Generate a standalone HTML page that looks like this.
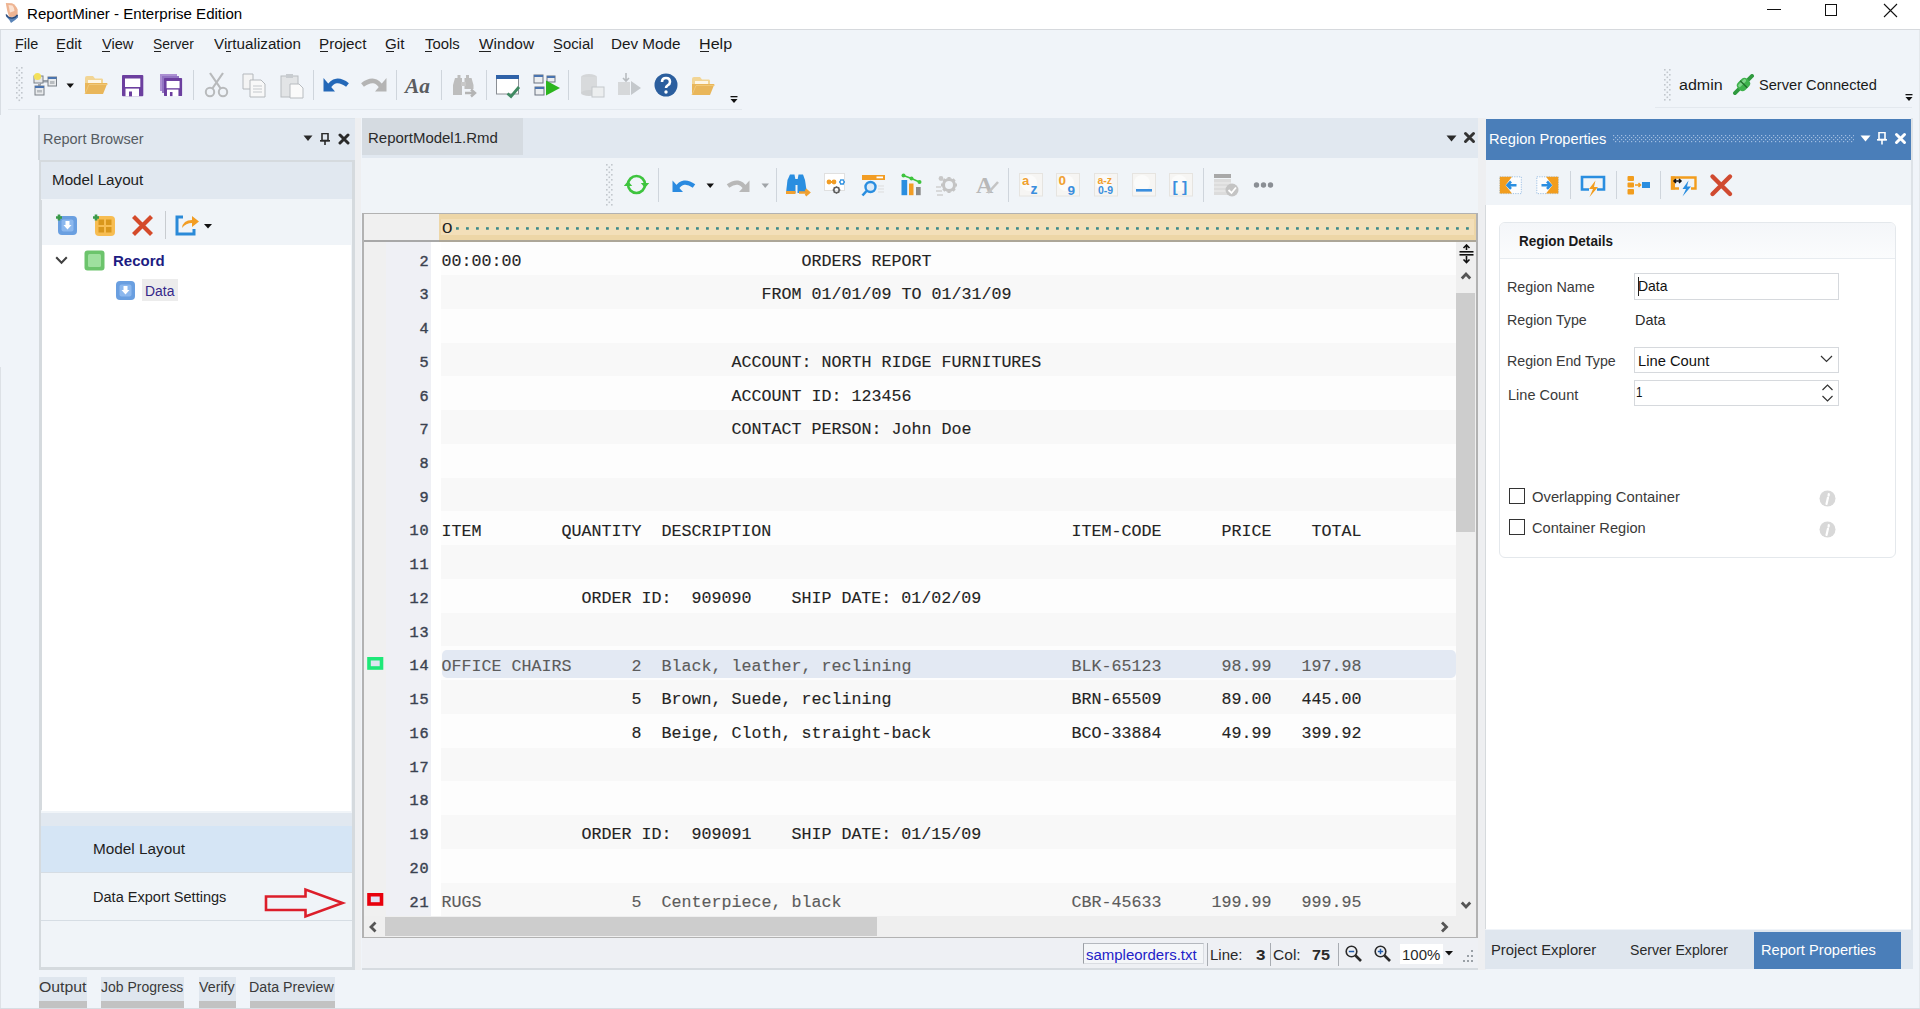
<!DOCTYPE html>
<html><head><meta charset="utf-8"><style>
html,body{margin:0;padding:0;width:1920px;height:1009px;overflow:hidden;background:#f0f4f9;}
.b{position:absolute;display:block;}
.t{position:absolute;white-space:pre;line-height:1;transform-origin:0 0;}
</style></head><body>
<div class="b" style="left:0px;top:0px;width:1920.00px;height:29.00px;background:#ffffff;"></div>
<div class="b" style="left:0px;top:29px;width:1920.00px;height:1.00px;background:#d6d9dd;"></div>
<svg class="b" style="left:0px;top:0px;" width="26" height="28" viewBox="0 0 26 28"><path d="M5.8 3 L12 3.2 Q16 5 17.6 9.5 L17.6 15.5 Q13 17.5 9.2 17 Q6.8 11 5.8 3 Z" fill="#eeb492"/><path d="M8.5 5 L12.5 5.5 Q14.5 8 14.5 11 L10 12.5 Z" fill="#fbe2d2"/><path d="M6 14.5 Q8.5 18.5 12.5 18 Q16 17.3 18 14.5 L18 17.5 Q15 20.5 11 23 Q9.5 19.5 6 16.5 Z" fill="#5a84b8"/><path d="M6 14.5 Q8.5 18.5 12.5 18 Q16 17.3 17.5 14.8" stroke="#2c4a78" stroke-width="1.4" fill="none"/></svg>
<div class="t" style="left:26.79px;top:5.83px;font-family:'Liberation Sans',sans-serif;font-size:15.5px;color:#000;font-weight:normal;transform:scaleX(0.9718);">ReportMiner - Enterprise Edition</div>
<div class="b" style="left:1767px;top:9px;width:14.00px;height:1.00px;background:#111;"></div>
<div class="b" style="left:1825px;top:4px;width:10px;height:10px;border:1px solid #111"></div>
<svg class="b" style="left:1883px;top:3px;" width="15" height="15" viewBox="0 0 15 15"><path d="M1 1 L14 14 M14 1 L1 14" stroke="#111" stroke-width="1.1"/></svg>
<div class="b" style="left:0px;top:30px;width:1.00px;height:85.00px;background:#d8dde3;"></div>
<div class="b" style="left:0px;top:367px;width:1.00px;height:642.00px;background:#dde1e6;"></div>
<div class="b" style="left:1919px;top:30px;width:1.00px;height:979.00px;background:#e4e8ec;"></div>
<div class="t" style="left:14.85px;top:35.58px;font-family:'Liberation Sans',sans-serif;font-size:15.5px;color:#1a1a1a;font-weight:normal;transform:scaleX(0.9309);">File</div>
<div class="t" style="left:56.30px;top:35.58px;font-family:'Liberation Sans',sans-serif;font-size:15.5px;color:#1a1a1a;font-weight:normal;transform:scaleX(0.9638);">Edit</div>
<div class="t" style="left:102.35px;top:35.58px;font-family:'Liberation Sans',sans-serif;font-size:15.5px;color:#1a1a1a;font-weight:normal;transform:scaleX(0.9421);">View</div>
<div class="t" style="left:153.06px;top:35.58px;font-family:'Liberation Sans',sans-serif;font-size:15.5px;color:#1a1a1a;font-weight:normal;transform:scaleX(0.8961);">Server</div>
<div class="t" style="left:213.60px;top:35.58px;font-family:'Liberation Sans',sans-serif;font-size:15.5px;color:#1a1a1a;font-weight:normal;transform:scaleX(0.9826);">Virtualization</div>
<div class="t" style="left:318.78px;top:35.58px;font-family:'Liberation Sans',sans-serif;font-size:15.5px;color:#1a1a1a;font-weight:normal;transform:scaleX(0.9827);">Project</div>
<div class="t" style="left:385.24px;top:35.58px;font-family:'Liberation Sans',sans-serif;font-size:15.5px;color:#1a1a1a;font-weight:normal;transform:scaleX(0.9783);">Git</div>
<div class="t" style="left:424.70px;top:35.58px;font-family:'Liberation Sans',sans-serif;font-size:15.5px;color:#1a1a1a;font-weight:normal;transform:scaleX(0.9592);">Tools</div>
<div class="t" style="left:478.75px;top:35.58px;font-family:'Liberation Sans',sans-serif;font-size:15.5px;color:#1a1a1a;font-weight:normal;transform:scaleX(0.9995);">Window</div>
<div class="t" style="left:553.01px;top:35.58px;font-family:'Liberation Sans',sans-serif;font-size:15.5px;color:#1a1a1a;font-weight:normal;transform:scaleX(0.9579);">Social</div>
<div class="t" style="left:611.28px;top:35.58px;font-family:'Liberation Sans',sans-serif;font-size:15.5px;color:#1a1a1a;font-weight:normal;transform:scaleX(0.9830);">Dev Mode</div>
<div class="t" style="left:698.71px;top:35.58px;font-family:'Liberation Sans',sans-serif;font-size:15.5px;color:#1a1a1a;font-weight:normal;transform:scaleX(1.0392);">Help</div>
<div class="b" style="left:15px;top:50.5px;width:7.00px;height:1.20px;background:#222;"></div>
<div class="b" style="left:57px;top:50.5px;width:7.00px;height:1.20px;background:#222;"></div>
<div class="b" style="left:102px;top:50.5px;width:8.00px;height:1.20px;background:#222;"></div>
<div class="b" style="left:154px;top:50.5px;width:7.00px;height:1.20px;background:#222;"></div>
<div class="b" style="left:226px;top:50.5px;width:5.00px;height:1.20px;background:#222;"></div>
<div class="b" style="left:320px;top:50.5px;width:8.00px;height:1.20px;background:#222;"></div>
<div class="b" style="left:386px;top:50.5px;width:8.00px;height:1.20px;background:#222;"></div>
<div class="b" style="left:425px;top:50.5px;width:7.00px;height:1.20px;background:#222;"></div>
<div class="b" style="left:479px;top:50.5px;width:12.00px;height:1.20px;background:#222;"></div>
<div class="b" style="left:554px;top:50.5px;width:7.00px;height:1.20px;background:#222;"></div>
<div class="b" style="left:700px;top:50.5px;width:9.00px;height:1.20px;background:#222;"></div>
<div class="b" style="left:8px;top:109px;width:734.00px;height:1.00px;background:#e3e8ee;"></div>
<div class="b" style="left:1655px;top:106.5px;width:257.00px;height:1.00px;background:#e3e8ee;"></div>
<svg class="b" style="left:15.5px;top:67px;" width="8" height="36" viewBox="0 0 8 36"><rect x="0" y="0.0" width="1.6" height="1.6" fill="#c2c7cd"/><rect x="5" y="0.0" width="1.6" height="1.6" fill="#c2c7cd"/><rect x="2.5" y="2.5" width="1.6" height="1.6" fill="#c2c7cd"/><rect x="0" y="5.0" width="1.6" height="1.6" fill="#c2c7cd"/><rect x="5" y="5.0" width="1.6" height="1.6" fill="#c2c7cd"/><rect x="2.5" y="7.5" width="1.6" height="1.6" fill="#c2c7cd"/><rect x="0" y="10.0" width="1.6" height="1.6" fill="#c2c7cd"/><rect x="5" y="10.0" width="1.6" height="1.6" fill="#c2c7cd"/><rect x="2.5" y="12.5" width="1.6" height="1.6" fill="#c2c7cd"/><rect x="0" y="15.0" width="1.6" height="1.6" fill="#c2c7cd"/><rect x="5" y="15.0" width="1.6" height="1.6" fill="#c2c7cd"/><rect x="2.5" y="17.5" width="1.6" height="1.6" fill="#c2c7cd"/><rect x="0" y="20.0" width="1.6" height="1.6" fill="#c2c7cd"/><rect x="5" y="20.0" width="1.6" height="1.6" fill="#c2c7cd"/><rect x="2.5" y="22.5" width="1.6" height="1.6" fill="#c2c7cd"/><rect x="0" y="25.0" width="1.6" height="1.6" fill="#c2c7cd"/><rect x="5" y="25.0" width="1.6" height="1.6" fill="#c2c7cd"/><rect x="2.5" y="27.5" width="1.6" height="1.6" fill="#c2c7cd"/><rect x="0" y="30.0" width="1.6" height="1.6" fill="#c2c7cd"/><rect x="5" y="30.0" width="1.6" height="1.6" fill="#c2c7cd"/><rect x="2.5" y="32.5" width="1.6" height="1.6" fill="#c2c7cd"/></svg>
<svg class="b" style="left:1664px;top:69px;" width="8" height="33" viewBox="0 0 8 33"><rect x="0" y="0.0" width="1.6" height="1.6" fill="#c2c7cd"/><rect x="5" y="0.0" width="1.6" height="1.6" fill="#c2c7cd"/><rect x="2.5" y="2.5" width="1.6" height="1.6" fill="#c2c7cd"/><rect x="0" y="5.0" width="1.6" height="1.6" fill="#c2c7cd"/><rect x="5" y="5.0" width="1.6" height="1.6" fill="#c2c7cd"/><rect x="2.5" y="7.5" width="1.6" height="1.6" fill="#c2c7cd"/><rect x="0" y="10.0" width="1.6" height="1.6" fill="#c2c7cd"/><rect x="5" y="10.0" width="1.6" height="1.6" fill="#c2c7cd"/><rect x="2.5" y="12.5" width="1.6" height="1.6" fill="#c2c7cd"/><rect x="0" y="15.0" width="1.6" height="1.6" fill="#c2c7cd"/><rect x="5" y="15.0" width="1.6" height="1.6" fill="#c2c7cd"/><rect x="2.5" y="17.5" width="1.6" height="1.6" fill="#c2c7cd"/><rect x="0" y="20.0" width="1.6" height="1.6" fill="#c2c7cd"/><rect x="5" y="20.0" width="1.6" height="1.6" fill="#c2c7cd"/><rect x="2.5" y="22.5" width="1.6" height="1.6" fill="#c2c7cd"/><rect x="0" y="25.0" width="1.6" height="1.6" fill="#c2c7cd"/><rect x="5" y="25.0" width="1.6" height="1.6" fill="#c2c7cd"/><rect x="2.5" y="27.5" width="1.6" height="1.6" fill="#c2c7cd"/><rect x="0" y="30.0" width="1.6" height="1.6" fill="#c2c7cd"/><rect x="5" y="30.0" width="1.6" height="1.6" fill="#c2c7cd"/></svg>
<div class="b" style="left:193px;top:70px;width:1.00px;height:30.00px;background:#cfd5dc;"></div>
<div class="b" style="left:313px;top:70px;width:1.00px;height:30.00px;background:#cfd5dc;"></div>
<div class="b" style="left:396px;top:70px;width:1.00px;height:30.00px;background:#cfd5dc;"></div>
<div class="b" style="left:441px;top:70px;width:1.00px;height:30.00px;background:#cfd5dc;"></div>
<div class="b" style="left:485.5px;top:70px;width:1.00px;height:30.00px;background:#cfd5dc;"></div>
<div class="b" style="left:568px;top:70px;width:1.00px;height:30.00px;background:#cfd5dc;"></div>
<svg class="b" style="left:33px;top:72px;" width="25" height="25" viewBox="0 0 25 25"><path d="M8 9 L15 9 M6 12 V18 L3 18" stroke="#7a828c" stroke-width="1.3" fill="none"/><path d="M9 10 L15 10 M8 11 L6 17" stroke="#9aa2ac" stroke-width="1" fill="none"/><rect x="1" y="4" width="9" height="7" fill="#e4e6e8" stroke="#7a8088"/><circle cx="4.5" cy="4.5" r="3.6" fill="#f3e05a"/><rect x="15" y="5" width="8.5" height="9" fill="#e8eaec" stroke="#7a8088"/><rect x="15" y="5" width="8.5" height="2" fill="#4a74b0"/><rect x="17" y="9" width="4.5" height="3" fill="#b8bcc0"/><rect x="2" y="14" width="9" height="9" fill="#e8eaec" stroke="#7a8088"/><rect x="2" y="14" width="9" height="2" fill="#4a74b0"/><rect x="4" y="18" width="5" height="2.5" fill="#b8bcc0"/></svg>
<svg class="b" style="left:66px;top:83px;" width="9" height="6" viewBox="0 0 9 6"><path d="M0.5 0.5 L8 0.5 L4.2 5 Z" fill="#111"/></svg>
<svg class="b" style="left:84px;top:75px;" width="25" height="20" viewBox="0 0 25 20"><path d="M1 3 Q1 1 3 1 L9 1 L11 3.5 L18 3.5 Q19 3.5 19 5 L19 9 L1 9 Z" fill="#f2d595"/><path d="M4 5 H17 V9 H4 Z" fill="#fdf6e6"/><path d="M1 19 L1 8 L23.5 8 L19 19 Z" fill="#e9b65a"/><path d="M1 19 L5 9.5 L23.5 9.5" stroke="#f0c878" stroke-width="1" fill="none"/></svg>
<svg class="b" style="left:122.4px;top:74.8px;" width="22" height="22" viewBox="0 0 22 22"><g transform="scale(1)"><rect x="0" y="0" width="21.3" height="21.3" rx="1" fill="#6c3f9f"/><rect x="3" y="3.5" width="15.3" height="8.5" fill="#fff"/><rect x="3.5" y="13.6" width="13.5" height="7.7" fill="#fff"/><rect x="7" y="16.5" width="3" height="4.8" fill="#6c3f9f"/></g></svg>
<svg class="b" style="left:160px;top:74px;" width="23" height="23" viewBox="0 0 23 23"><rect x="0" y="0" width="17" height="17" fill="#ab8fd2"/><rect x="2" y="2" width="17" height="17" fill="#9274c2"/></svg>
<svg class="b" style="left:164px;top:78px;" width="22" height="22" viewBox="0 0 22 22"><g transform="scale(0.85)"><rect x="0" y="0" width="21.3" height="21.3" rx="1" fill="#6c3f9f"/><rect x="3" y="3.5" width="15.3" height="8.5" fill="#fff"/><rect x="3.5" y="13.6" width="13.5" height="7.7" fill="#fff"/><rect x="7" y="16.5" width="3" height="4.8" fill="#6c3f9f"/></g></svg>
<svg class="b" style="left:204px;top:72px;" width="25" height="26" viewBox="0 0 25 26"><path d="M6 1 L17 17 M19 1 L8 17" stroke="#b8babc" stroke-width="2.2"/><circle cx="6" cy="20" r="4.2" fill="none" stroke="#b8babc" stroke-width="2"/><circle cx="19" cy="20" r="4.2" fill="none" stroke="#b8babc" stroke-width="2"/></svg>
<svg class="b" style="left:242px;top:73px;" width="24" height="25" viewBox="0 0 24 25"><path d="M1 1 L11 1 L11 16 L1 16 Z" fill="#f4f4f4" stroke="#b4b8bc"/><path d="M8 7 L19 7 L23 11 L23 24 L8 24 Z" fill="#f8f8f8" stroke="#b4b8bc"/><path d="M11 13 H20 M11 16 H20 M11 19 H20" stroke="#c4c8cc"/></svg>
<svg class="b" style="left:280px;top:73px;" width="24" height="26" viewBox="0 0 24 26"><rect x="1" y="3" width="17" height="21" fill="#e2e4e6" stroke="#b8bcc0"/><rect x="6" y="1" width="7" height="4" fill="#c8ccd0"/><path d="M10 11 L19 11 L23 15 L23 25 L10 25 Z" fill="#fafafa" stroke="#b8bcc0"/></svg>
<svg class="b" style="left:322px;top:76px;" width="27" height="18" viewBox="0 0 27 18"><path d="M1.5 2 L1.5 15.5 L13 15.5 Z" fill="#2468b8"/><path d="M6 12 Q13 -0.5 25.5 9" stroke="#2468b8" stroke-width="4.6" fill="none"/></svg>
<svg class="b" style="left:361px;top:76px;" width="27" height="18" viewBox="0 0 27 18"><path d="M25.5 2 L25.5 15.5 L14 15.5 Z" fill="#b4b4b4"/><path d="M21 12 Q14 -0.5 1.5 9" stroke="#b4b4b4" stroke-width="4.6" fill="none"/></svg>
<div class="t" style="left:405px;top:76px;font-family:'Liberation Serif',serif;font-style:italic;font-weight:bold;font-size:21px;color:#5a5c60;transform:scaleX(1.02)">Aa</div>
<svg class="b" style="left:452px;top:72px;" width="26" height="28" viewBox="0 0 26 28"><rect x="5.5" y="3" width="3" height="4" fill="#bdbdbd"/><rect x="14" y="3" width="3" height="4" fill="#bdbdbd"/><path d="M3 6 H10 V23 H1 V13 Z" fill="#bdbdbd"/><path d="M12.5 6 H19.5 L21.5 13 V17 H12.5 Z" fill="#bdbdbd"/><rect x="9" y="10" width="5" height="4" fill="#c8c8c8"/><path d="M13 21 H22 M19 17.5 L23 21 L19 24.5" stroke="#b4b4b4" stroke-width="2.4" fill="none"/></svg>
<svg class="b" style="left:495px;top:74px;" width="27" height="26" viewBox="0 0 27 26"><rect x="1.5" y="1.5" width="22" height="18.5" fill="#fff" stroke="#8a8e94" stroke-width="1"/><rect x="1" y="1" width="23" height="4" fill="#2f62a8"/><path d="M12.5 19.5 L16 22.5 L24 13" stroke="#3f8a62" stroke-width="2.8" fill="none"/></svg>
<svg class="b" style="left:533px;top:74px;" width="28" height="24" viewBox="0 0 28 24"><rect x="1" y="1" width="9" height="8" fill="#eceef0" stroke="#6a7280"/><rect x="1" y="1" width="9" height="2" fill="#4a74b0"/><rect x="2" y="13" width="9" height="8" fill="#eceef0" stroke="#6a7280"/><rect x="2" y="13" width="9" height="2" fill="#4a74b0"/><rect x="14" y="2" width="8" height="6" fill="#eceef0" stroke="#6a7280"/><rect x="14" y="2" width="8" height="2" fill="#4a74b0"/><path d="M13 6.5 L27 14 L13 21.5 Z" fill="#2cb51e"/></svg>
<svg class="b" style="left:580px;top:73px;" width="26" height="26" viewBox="0 0 26 26"><ellipse cx="9" cy="4" rx="8" ry="3" fill="#d4d6d8"/><rect x="1" y="4" width="16" height="16" fill="#d8dadc"/><ellipse cx="9" cy="20" rx="8" ry="3" fill="#d0d2d4"/><rect x="12" y="14" width="12" height="10" fill="#eceeef" stroke="#c4c8cc"/></svg>
<svg class="b" style="left:616px;top:72px;" width="26" height="26" viewBox="0 0 26 26"><path d="M10 1 V9 M7 6 L10 9 L13 6" stroke="#b8bcc0" stroke-width="1.6" fill="none"/><rect x="2" y="10" width="12" height="13" fill="#d6d8da"/><path d="M15 9 L25 16 L15 23 Z" fill="#c4c8cc"/></svg>
<svg class="b" style="left:654px;top:73px;" width="25" height="25" viewBox="0 0 25 25"><circle cx="12" cy="12" r="11.5" fill="#2b5e9e"/><path d="M8 9 Q8 5 12 5 Q16 5 16 9 Q16 11 13.5 12.5 Q12 13.5 12 15" stroke="#fff" stroke-width="2.6" fill="none"/><circle cx="12" cy="19" r="1.7" fill="#fff"/></svg>
<svg class="b" style="left:691px;top:76px;" width="25" height="20" viewBox="0 0 25 20"><path d="M1 3 Q1 1 3 1 L9 1 L11 3.5 L18 3.5 Q19 3.5 19 5 L19 9 L1 9 Z" fill="#f2d595"/><path d="M4 5 H17 V9 H4 Z" fill="#fdf6e6"/><path d="M1 19 L1 8 L23.5 8 L19 19 Z" fill="#e9b65a"/><path d="M1 19 L5 9.5 L23.5 9.5" stroke="#f0c878" stroke-width="1" fill="none"/></svg>
<svg class="b" style="left:730px;top:96px;" width="9" height="8" viewBox="0 0 9 8"><rect x="0.5" y="0" width="7" height="1.3" fill="#111"/><path d="M0.5 3 L7.5 3 L4 7 Z" fill="#111"/></svg>
<svg class="b" style="left:1904.5px;top:94px;" width="9" height="8" viewBox="0 0 9 8"><rect x="0.5" y="0" width="7" height="1.3" fill="#111"/><path d="M0.5 3 L7.5 3 L4 7 Z" fill="#111"/></svg>
<div class="t" style="left:1679.36px;top:76.83px;font-family:'Liberation Sans',sans-serif;font-size:15.5px;color:#1a1a1a;font-weight:normal;transform:scaleX(1.0342);">admin</div>
<svg class="b" style="left:1732px;top:74px;" width="23" height="23" viewBox="0 0 23 23"><g transform="translate(11.5,10.5) rotate(-45)"><rect x="-14" y="-1.9" width="28" height="3.8" rx="1.9" fill="#2f9a3f"/><rect x="-6.5" y="-5.2" width="13" height="10.4" rx="4" fill="#3fb24d"/><rect x="-5" y="-3.5" width="10" height="3" rx="1.5" fill="#7fd48a"/><path d="M0.3 -5 V5" stroke="#1f6f2b" stroke-width="1.3"/></g></svg>
<div class="t" style="left:1759.27px;top:76.83px;font-family:'Liberation Sans',sans-serif;font-size:15.5px;color:#1a1a1a;font-weight:normal;transform:scaleX(0.9426);">Server Connected</div>
<div class="b" style="left:39px;top:977px;width:48.00px;height:24.00px;background:#dfe6ee;"></div>
<div class="b" style="left:39px;top:1001px;width:48.00px;height:8.00px;background:#c2c2c2;"></div>
<div class="t" style="left:38.71px;top:979.03px;font-family:'Liberation Sans',sans-serif;font-size:15.5px;color:#3a3a3a;font-weight:normal;transform:scaleX(1.0204);">Output</div>
<div class="b" style="left:101px;top:977px;width:83.00px;height:24.00px;background:#dfe6ee;"></div>
<div class="b" style="left:101px;top:1001px;width:83.00px;height:8.00px;background:#c2c2c2;"></div>
<div class="t" style="left:101.22px;top:979.03px;font-family:'Liberation Sans',sans-serif;font-size:15.5px;color:#3a3a3a;font-weight:normal;transform:scaleX(0.9019);">Job Progress</div>
<div class="b" style="left:199px;top:977px;width:37.00px;height:24.00px;background:#dfe6ee;"></div>
<div class="b" style="left:199px;top:1001px;width:37.00px;height:8.00px;background:#c2c2c2;"></div>
<div class="t" style="left:199.36px;top:979.03px;font-family:'Liberation Sans',sans-serif;font-size:15.5px;color:#3a3a3a;font-weight:normal;transform:scaleX(0.9198);">Verify</div>
<div class="b" style="left:250px;top:977px;width:85.00px;height:24.00px;background:#dfe6ee;"></div>
<div class="b" style="left:250px;top:1001px;width:85.00px;height:8.00px;background:#c2c2c2;"></div>
<div class="t" style="left:249.36px;top:979.03px;font-family:'Liberation Sans',sans-serif;font-size:15.5px;color:#3a3a3a;font-weight:normal;transform:scaleX(0.9193);">Data Preview</div>
<div class="b" style="left:0px;top:1008px;width:1920.00px;height:1.00px;background:#d8dde3;"></div>
<div class="b" style="left:38.2px;top:115px;width:1.40px;height:45.40px;background:#d0d6dc;"></div>
<div class="b" style="left:39.6px;top:118px;width:315.10px;height:42.40px;background:#e1e8f0;"></div>
<div class="b" style="left:39.6px;top:118px;width:315.10px;height:1.00px;background:#dce3ea;"></div>
<div class="b" style="left:38.5px;top:160.4px;width:316.20px;height:809.20px;background:#d5dade;"></div>
<div class="b" style="left:41.3px;top:161.8px;width:311.10px;height:805.40px;background:#f0f4f8;"></div>
<div class="t" style="left:43.14px;top:131.02px;font-family:'Liberation Sans',sans-serif;font-size:15.5px;color:#555b61;font-weight:normal;transform:scaleX(0.9343);">Report Browser</div>
<svg class="b" style="left:303px;top:135px;" width="10" height="7" viewBox="0 0 10 7"><path d="M0.5 0.5 L9.5 0.5 L5 6 Z" fill="#2a2a2a"/></svg>
<svg class="b" style="left:320px;top:133px;" width="11" height="12" viewBox="0 0 11 12"><rect x="2" y="0.5" width="6" height="7" fill="none" stroke="#2a2a2a" stroke-width="1.6"/><rect x="0" y="7" width="10" height="1.6" fill="#2a2a2a"/><rect x="4.2" y="8" width="1.6" height="4" fill="#2a2a2a"/></svg>
<svg class="b" style="left:338px;top:133px;" width="12" height="12" viewBox="0 0 12 12"><path d="M2 2 L10 10 M10 2 L2 10" stroke="#2a2a2a" stroke-width="3" stroke-linecap="round"/></svg>
<div class="b" style="left:41.3px;top:161.8px;width:311.10px;height:37.20px;background:#e1e8f0;"></div>
<div class="t" style="left:52.28px;top:171.82px;font-family:'Liberation Sans',sans-serif;font-size:15.5px;color:#222;font-weight:normal;transform:scaleX(0.9808);">Model Layout</div>
<div class="b" style="left:38.5px;top:200.3px;width:3.90px;height:610.20px;background:#d5dade;"></div>
<div class="b" style="left:42.4px;top:200.3px;width:308.90px;height:44.70px;background:#f0f4f8;"></div>
<svg class="b" style="left:56.5px;top:214.5px;overflow:visible" width="21" height="21" viewBox="0 0 21 21"><rect x="1" y="1" width="19" height="19" rx="4" fill="#6a9fe0"/><rect x="4.5" y="4.5" width="12" height="12" rx="2" fill="#8cb8ee"/><path d="M8.5 6 V10 H6.5 L10.5 14.5 L14.5 10 H12.5 V6 Z" fill="#fff"/><path d="M-1 2.5 H5 M2 -0.5 V5.5" stroke="#3a9a4a" stroke-width="2.6" transform="translate(0,0)"/></svg>
<svg class="b" style="left:94px;top:214.5px;overflow:visible" width="22" height="22" viewBox="0 0 22 22"><rect x="1" y="1" width="20" height="20" rx="4" fill="#f7bd52"/><rect x="4.5" y="4.5" width="5.5" height="5.5" fill="#d9971c"/><rect x="12" y="4.5" width="5.5" height="5.5" fill="#d9971c"/><rect x="4.5" y="12" width="5.5" height="5.5" fill="#d9971c"/><rect x="12" y="12" width="5.5" height="5.5" fill="#d9971c"/><path d="M-1 2.5 H5 M2 -0.5 V5.5" stroke="#3a9a4a" stroke-width="2.6"/></svg>
<svg class="b" style="left:131px;top:214px;" width="23" height="23" viewBox="0 0 23 23"><path d="M2.5 2.5 L20.5 20.5 M20.5 2.5 L2.5 20.5" stroke="#d44a2a" stroke-width="4.2"/></svg>
<div class="b" style="left:164.5px;top:211px;width:1.00px;height:28.00px;background:#c8ccd0;"></div>
<svg class="b" style="left:175px;top:213px;" width="26" height="24" viewBox="0 0 26 24"><path d="M8 4 H2 V21 H19 V16" stroke="#2a8ad8" stroke-width="3" fill="none"/><path d="M7 15 Q8 7 17 7 L17 3 L24 8.5 L17 14 L17 10 Q11 10 7 15 Z" fill="#f29d24"/></svg>
<svg class="b" style="left:204px;top:224px;" width="8" height="5" viewBox="0 0 8 5"><path d="M0 0 L8 0 L4 4.5 Z" fill="#111"/></svg>
<div class="b" style="left:42.4px;top:245px;width:308.90px;height:565.50px;background:#ffffff;"></div>
<svg class="b" style="left:55px;top:256px;" width="14" height="9" viewBox="0 0 14 9"><path d="M1.2 1.2 L6.5 6.8 L11.8 1.2" stroke="#404040" stroke-width="2" fill="none"/></svg>
<svg class="b" style="left:84px;top:250px;" width="21" height="21" viewBox="0 0 21 21"><rect x="0.5" y="0.5" width="20" height="20" rx="3" fill="#6cc46c"/><rect x="4" y="4" width="13" height="13" rx="1.5" fill="#9fe09f"/></svg>
<div class="t" style="left:113.45px;top:253.32px;font-family:'Liberation Sans',sans-serif;font-size:15.5px;color:#1c1c82;font-weight:bold;transform:scaleX(0.9668);">Record</div>
<div class="b" style="left:142.3px;top:279px;width:35.40px;height:22.40px;background:#ececec;"></div>
<svg class="b" style="left:114.5px;top:280px;overflow:visible" width="21" height="21" viewBox="0 0 21 21"><rect x="1" y="1" width="19" height="19" rx="4" fill="#6a9fe0"/><rect x="4.5" y="4.5" width="12" height="12" rx="2" fill="#8cb8ee"/><path d="M8.5 6 V10 H6.5 L10.5 14.5 L14.5 10 H12.5 V6 Z" fill="#fff"/></svg>
<div class="t" style="left:144.89px;top:283.32px;font-family:'Liberation Sans',sans-serif;font-size:15.5px;color:#35288a;font-weight:normal;transform:scaleX(0.8982);">Data</div>
<div class="b" style="left:41.3px;top:812.5px;width:311.10px;height:13.00px;background:#e1e8f0;"></div>
<div class="b" style="left:41.3px;top:825.5px;width:311.10px;height:46.50px;background:#d5e5f5;"></div>
<div class="t" style="left:92.97px;top:841.23px;font-family:'Liberation Sans',sans-serif;font-size:15.5px;color:#1e1e1e;font-weight:normal;transform:scaleX(0.9895);">Model Layout</div>
<div class="b" style="left:41.3px;top:872px;width:311.10px;height:1.00px;background:#d6dde4;"></div>
<div class="t" style="left:93.04px;top:889.43px;font-family:'Liberation Sans',sans-serif;font-size:15.5px;color:#1e1e1e;font-weight:normal;transform:scaleX(0.9382);">Data Export Settings</div>
<div class="b" style="left:41.3px;top:920px;width:311.10px;height:1.00px;background:#d6dde4;"></div>
<svg class="b" style="left:262px;top:885px;" width="88" height="36" viewBox="0 0 88 36"><path d="M4 11.5 H43.5 V4.5 L80.5 18 L43.5 31.5 V25 H4 Z" fill="none" stroke="#dc1e2a" stroke-width="2.6"/></svg>
<div class="b" style="left:354.7px;top:118px;width:6.80px;height:851.60px;background:#eeeff1;"></div>
<div class="b" style="left:361.5px;top:118.4px;width:1116.40px;height:39.20px;background:#e1e8f0;"></div>
<div class="b" style="left:361.5px;top:118.4px;width:161.50px;height:36.60px;background:#d5dbe1;"></div>
<div class="t" style="left:368.30px;top:130.32px;font-family:'Liberation Sans',sans-serif;font-size:15.5px;color:#2a2a2a;font-weight:normal;transform:scaleX(0.9655);">ReportModel1.Rmd</div>
<svg class="b" style="left:1446px;top:135px;" width="11" height="7" viewBox="0 0 11 7"><path d="M0.5 0.5 L10.5 0.5 L5.5 6.5 Z" fill="#2a2a2a"/></svg>
<svg class="b" style="left:1463px;top:131px;" width="13" height="13" viewBox="0 0 13 13"><path d="M2.5 2.5 L10.5 10.5 M10.5 2.5 L2.5 10.5" stroke="#333" stroke-width="3" stroke-linecap="round"/></svg>
<div class="b" style="left:361.5px;top:157.6px;width:1116.40px;height:55.40px;background:#f0f4f8;"></div>
<svg class="b" style="left:606.2px;top:164px;" width="8" height="42" viewBox="0 0 8 42"><rect x="0" y="0.0" width="1.6" height="1.6" fill="#c2c7cd"/><rect x="5" y="0.0" width="1.6" height="1.6" fill="#c2c7cd"/><rect x="2.5" y="2.5" width="1.6" height="1.6" fill="#c2c7cd"/><rect x="0" y="5.0" width="1.6" height="1.6" fill="#c2c7cd"/><rect x="5" y="5.0" width="1.6" height="1.6" fill="#c2c7cd"/><rect x="2.5" y="7.5" width="1.6" height="1.6" fill="#c2c7cd"/><rect x="0" y="10.0" width="1.6" height="1.6" fill="#c2c7cd"/><rect x="5" y="10.0" width="1.6" height="1.6" fill="#c2c7cd"/><rect x="2.5" y="12.5" width="1.6" height="1.6" fill="#c2c7cd"/><rect x="0" y="15.0" width="1.6" height="1.6" fill="#c2c7cd"/><rect x="5" y="15.0" width="1.6" height="1.6" fill="#c2c7cd"/><rect x="2.5" y="17.5" width="1.6" height="1.6" fill="#c2c7cd"/><rect x="0" y="20.0" width="1.6" height="1.6" fill="#c2c7cd"/><rect x="5" y="20.0" width="1.6" height="1.6" fill="#c2c7cd"/><rect x="2.5" y="22.5" width="1.6" height="1.6" fill="#c2c7cd"/><rect x="0" y="25.0" width="1.6" height="1.6" fill="#c2c7cd"/><rect x="5" y="25.0" width="1.6" height="1.6" fill="#c2c7cd"/><rect x="2.5" y="27.5" width="1.6" height="1.6" fill="#c2c7cd"/><rect x="0" y="30.0" width="1.6" height="1.6" fill="#c2c7cd"/><rect x="5" y="30.0" width="1.6" height="1.6" fill="#c2c7cd"/><rect x="2.5" y="32.5" width="1.6" height="1.6" fill="#c2c7cd"/><rect x="0" y="35.0" width="1.6" height="1.6" fill="#c2c7cd"/><rect x="5" y="35.0" width="1.6" height="1.6" fill="#c2c7cd"/><rect x="2.5" y="37.5" width="1.6" height="1.6" fill="#c2c7cd"/><rect x="0" y="40.0" width="1.6" height="1.6" fill="#c2c7cd"/><rect x="5" y="40.0" width="1.6" height="1.6" fill="#c2c7cd"/></svg>
<div class="b" style="left:658px;top:168px;width:1.00px;height:34.00px;background:#cfd5dc;"></div>
<div class="b" style="left:776px;top:168px;width:1.00px;height:34.00px;background:#cfd5dc;"></div>
<div class="b" style="left:1007.5px;top:168px;width:1.00px;height:34.00px;background:#cfd5dc;"></div>
<div class="b" style="left:1203px;top:168px;width:1.00px;height:34.00px;background:#cfd5dc;"></div>
<div class="b" style="left:361.5px;top:213px;width:1116.50px;height:725.00px;background:#b2b2b2;"></div>
<div class="b" style="left:364px;top:214px;width:75.00px;height:26.00px;background:#f0f0f0;"></div>
<div class="b" style="left:439px;top:214px;width:1037.00px;height:26.00px;background:#edd6a7;"></div>
<div class="b" style="left:441px;top:219px;width:1033.00px;height:16.00px;background:#f3dfb9;"></div>
<div class="b" style="left:364px;top:240px;width:75.00px;height:2.00px;background:#a8a8a8;"></div>
<div class="b" style="left:439px;top:240px;width:1037.00px;height:2.00px;background:#aca698;"></div>
<svg class="b" style="left:456px;top:226.5px;" width="1020" height="3" viewBox="0 0 1020 3"><rect x="0" y="0.2" width="2.8" height="2.5" fill="#3a8888"/><rect x="10" y="0.2" width="2.8" height="2.5" fill="#3a8888"/><rect x="20" y="0.2" width="2.8" height="2.5" fill="#3a8888"/><rect x="30" y="0.2" width="2.8" height="2.5" fill="#3a8888"/><rect x="40" y="0.2" width="2.8" height="2.5" fill="#3a8888"/><rect x="50" y="0.2" width="2.8" height="2.5" fill="#3a8888"/><rect x="60" y="0.2" width="2.8" height="2.5" fill="#3a8888"/><rect x="70" y="0.2" width="2.8" height="2.5" fill="#3a8888"/><rect x="80" y="0.2" width="2.8" height="2.5" fill="#3a8888"/><rect x="90" y="0.2" width="2.8" height="2.5" fill="#3a8888"/><rect x="100" y="0.2" width="2.8" height="2.5" fill="#3a8888"/><rect x="110" y="0.2" width="2.8" height="2.5" fill="#3a8888"/><rect x="120" y="0.2" width="2.8" height="2.5" fill="#3a8888"/><rect x="130" y="0.2" width="2.8" height="2.5" fill="#3a8888"/><rect x="140" y="0.2" width="2.8" height="2.5" fill="#3a8888"/><rect x="150" y="0.2" width="2.8" height="2.5" fill="#3a8888"/><rect x="160" y="0.2" width="2.8" height="2.5" fill="#3a8888"/><rect x="170" y="0.2" width="2.8" height="2.5" fill="#3a8888"/><rect x="180" y="0.2" width="2.8" height="2.5" fill="#3a8888"/><rect x="190" y="0.2" width="2.8" height="2.5" fill="#3a8888"/><rect x="200" y="0.2" width="2.8" height="2.5" fill="#3a8888"/><rect x="210" y="0.2" width="2.8" height="2.5" fill="#3a8888"/><rect x="220" y="0.2" width="2.8" height="2.5" fill="#3a8888"/><rect x="230" y="0.2" width="2.8" height="2.5" fill="#3a8888"/><rect x="240" y="0.2" width="2.8" height="2.5" fill="#3a8888"/><rect x="250" y="0.2" width="2.8" height="2.5" fill="#3a8888"/><rect x="260" y="0.2" width="2.8" height="2.5" fill="#3a8888"/><rect x="270" y="0.2" width="2.8" height="2.5" fill="#3a8888"/><rect x="280" y="0.2" width="2.8" height="2.5" fill="#3a8888"/><rect x="290" y="0.2" width="2.8" height="2.5" fill="#3a8888"/><rect x="300" y="0.2" width="2.8" height="2.5" fill="#3a8888"/><rect x="310" y="0.2" width="2.8" height="2.5" fill="#3a8888"/><rect x="320" y="0.2" width="2.8" height="2.5" fill="#3a8888"/><rect x="330" y="0.2" width="2.8" height="2.5" fill="#3a8888"/><rect x="340" y="0.2" width="2.8" height="2.5" fill="#3a8888"/><rect x="350" y="0.2" width="2.8" height="2.5" fill="#3a8888"/><rect x="360" y="0.2" width="2.8" height="2.5" fill="#3a8888"/><rect x="370" y="0.2" width="2.8" height="2.5" fill="#3a8888"/><rect x="380" y="0.2" width="2.8" height="2.5" fill="#3a8888"/><rect x="390" y="0.2" width="2.8" height="2.5" fill="#3a8888"/><rect x="400" y="0.2" width="2.8" height="2.5" fill="#3a8888"/><rect x="410" y="0.2" width="2.8" height="2.5" fill="#3a8888"/><rect x="420" y="0.2" width="2.8" height="2.5" fill="#3a8888"/><rect x="430" y="0.2" width="2.8" height="2.5" fill="#3a8888"/><rect x="440" y="0.2" width="2.8" height="2.5" fill="#3a8888"/><rect x="450" y="0.2" width="2.8" height="2.5" fill="#3a8888"/><rect x="460" y="0.2" width="2.8" height="2.5" fill="#3a8888"/><rect x="470" y="0.2" width="2.8" height="2.5" fill="#3a8888"/><rect x="480" y="0.2" width="2.8" height="2.5" fill="#3a8888"/><rect x="490" y="0.2" width="2.8" height="2.5" fill="#3a8888"/><rect x="500" y="0.2" width="2.8" height="2.5" fill="#3a8888"/><rect x="510" y="0.2" width="2.8" height="2.5" fill="#3a8888"/><rect x="520" y="0.2" width="2.8" height="2.5" fill="#3a8888"/><rect x="530" y="0.2" width="2.8" height="2.5" fill="#3a8888"/><rect x="540" y="0.2" width="2.8" height="2.5" fill="#3a8888"/><rect x="550" y="0.2" width="2.8" height="2.5" fill="#3a8888"/><rect x="560" y="0.2" width="2.8" height="2.5" fill="#3a8888"/><rect x="570" y="0.2" width="2.8" height="2.5" fill="#3a8888"/><rect x="580" y="0.2" width="2.8" height="2.5" fill="#3a8888"/><rect x="590" y="0.2" width="2.8" height="2.5" fill="#3a8888"/><rect x="600" y="0.2" width="2.8" height="2.5" fill="#3a8888"/><rect x="610" y="0.2" width="2.8" height="2.5" fill="#3a8888"/><rect x="620" y="0.2" width="2.8" height="2.5" fill="#3a8888"/><rect x="630" y="0.2" width="2.8" height="2.5" fill="#3a8888"/><rect x="640" y="0.2" width="2.8" height="2.5" fill="#3a8888"/><rect x="650" y="0.2" width="2.8" height="2.5" fill="#3a8888"/><rect x="660" y="0.2" width="2.8" height="2.5" fill="#3a8888"/><rect x="670" y="0.2" width="2.8" height="2.5" fill="#3a8888"/><rect x="680" y="0.2" width="2.8" height="2.5" fill="#3a8888"/><rect x="690" y="0.2" width="2.8" height="2.5" fill="#3a8888"/><rect x="700" y="0.2" width="2.8" height="2.5" fill="#3a8888"/><rect x="710" y="0.2" width="2.8" height="2.5" fill="#3a8888"/><rect x="720" y="0.2" width="2.8" height="2.5" fill="#3a8888"/><rect x="730" y="0.2" width="2.8" height="2.5" fill="#3a8888"/><rect x="740" y="0.2" width="2.8" height="2.5" fill="#3a8888"/><rect x="750" y="0.2" width="2.8" height="2.5" fill="#3a8888"/><rect x="760" y="0.2" width="2.8" height="2.5" fill="#3a8888"/><rect x="770" y="0.2" width="2.8" height="2.5" fill="#3a8888"/><rect x="780" y="0.2" width="2.8" height="2.5" fill="#3a8888"/><rect x="790" y="0.2" width="2.8" height="2.5" fill="#3a8888"/><rect x="800" y="0.2" width="2.8" height="2.5" fill="#3a8888"/><rect x="810" y="0.2" width="2.8" height="2.5" fill="#3a8888"/><rect x="820" y="0.2" width="2.8" height="2.5" fill="#3a8888"/><rect x="830" y="0.2" width="2.8" height="2.5" fill="#3a8888"/><rect x="840" y="0.2" width="2.8" height="2.5" fill="#3a8888"/><rect x="850" y="0.2" width="2.8" height="2.5" fill="#3a8888"/><rect x="860" y="0.2" width="2.8" height="2.5" fill="#3a8888"/><rect x="870" y="0.2" width="2.8" height="2.5" fill="#3a8888"/><rect x="880" y="0.2" width="2.8" height="2.5" fill="#3a8888"/><rect x="890" y="0.2" width="2.8" height="2.5" fill="#3a8888"/><rect x="900" y="0.2" width="2.8" height="2.5" fill="#3a8888"/><rect x="910" y="0.2" width="2.8" height="2.5" fill="#3a8888"/><rect x="920" y="0.2" width="2.8" height="2.5" fill="#3a8888"/><rect x="930" y="0.2" width="2.8" height="2.5" fill="#3a8888"/><rect x="940" y="0.2" width="2.8" height="2.5" fill="#3a8888"/><rect x="950" y="0.2" width="2.8" height="2.5" fill="#3a8888"/><rect x="960" y="0.2" width="2.8" height="2.5" fill="#3a8888"/><rect x="970" y="0.2" width="2.8" height="2.5" fill="#3a8888"/><rect x="980" y="0.2" width="2.8" height="2.5" fill="#3a8888"/><rect x="990" y="0.2" width="2.8" height="2.5" fill="#3a8888"/><rect x="1000" y="0.2" width="2.8" height="2.5" fill="#3a8888"/><rect x="1010" y="0.2" width="2.8" height="2.5" fill="#3a8888"/></svg>
<div class="t" style="left:442.25px;top:220.90px;font-family:'Liberation Sans',sans-serif;font-size:14px;color:#222;font-weight:normal;transform:scaleX(1.3393);">0</div>
<div class="b" style="left:364px;top:242px;width:22.00px;height:674.30px;background:#f0f0f0;"></div>
<div class="b" style="left:386px;top:242px;width:45.00px;height:674.30px;background:#eff0f5;"></div>
<div class="b" style="left:431px;top:242px;width:10.00px;height:674.30px;background:#ffffff;"></div>
<div class="b" style="left:1456px;top:242px;width:20.00px;height:674.30px;background:#efefef;"></div>
<div class="b" style="left:1456px;top:293px;width:19.00px;height:239.00px;background:#cdcdcd;"></div>
<svg class="b" style="left:1458px;top:244px;" width="17" height="20" viewBox="0 0 17 20"><path d="M8.5 1 V6 M5.5 4 L8.5 1 L11.5 4" stroke="#111" stroke-width="1.6" fill="none"/><rect x="1.5" y="7" width="14" height="1.6" fill="#111"/><rect x="1.5" y="10" width="14" height="1.6" fill="#111"/><path d="M8.5 12 V18 M5.5 15.5 L8.5 18.5 L11.5 15.5" stroke="#111" stroke-width="1.6" fill="none"/></svg>
<svg class="b" style="left:1460px;top:270px;" width="12" height="11" viewBox="0 0 12 11"><path d="M1.8 8.5 L6 4 L10.2 8.5" stroke="#555" stroke-width="2.8" fill="none"/></svg>
<svg class="b" style="left:1460px;top:900px;" width="12" height="11" viewBox="0 0 12 11"><path d="M1.8 2.5 L6 7 L10.2 2.5" stroke="#555" stroke-width="2.8" fill="none"/></svg>
<div class="b" style="left:441px;top:241.5px;width:1014.50px;height:33.74px;background:#fdfdfd;"></div>
<div class="b" style="left:441px;top:275.24px;width:1014.50px;height:33.74px;background:#f8f8f8;"></div>
<div class="b" style="left:441px;top:308.98px;width:1014.50px;height:33.74px;background:#fdfdfd;"></div>
<div class="b" style="left:441px;top:342.72px;width:1014.50px;height:33.74px;background:#f8f8f8;"></div>
<div class="b" style="left:441px;top:376.46px;width:1014.50px;height:33.74px;background:#fdfdfd;"></div>
<div class="b" style="left:441px;top:410.2px;width:1014.50px;height:33.74px;background:#f8f8f8;"></div>
<div class="b" style="left:441px;top:443.94px;width:1014.50px;height:33.74px;background:#fdfdfd;"></div>
<div class="b" style="left:441px;top:477.68px;width:1014.50px;height:33.74px;background:#f8f8f8;"></div>
<div class="b" style="left:441px;top:511.42px;width:1014.50px;height:33.74px;background:#fdfdfd;"></div>
<div class="b" style="left:441px;top:545.16px;width:1014.50px;height:33.74px;background:#f8f8f8;"></div>
<div class="b" style="left:441px;top:578.9px;width:1014.50px;height:33.74px;background:#fdfdfd;"></div>
<div class="b" style="left:441px;top:612.64px;width:1014.50px;height:33.74px;background:#f8f8f8;"></div>
<div class="b" style="left:441px;top:646.38px;width:1014.50px;height:33.74px;background:#fdfdfd;"></div>
<div class="b" style="left:441px;top:680.12px;width:1014.50px;height:33.74px;background:#f8f8f8;"></div>
<div class="b" style="left:441px;top:713.86px;width:1014.50px;height:33.74px;background:#fdfdfd;"></div>
<div class="b" style="left:441px;top:747.6px;width:1014.50px;height:33.74px;background:#f8f8f8;"></div>
<div class="b" style="left:441px;top:781.34px;width:1014.50px;height:33.74px;background:#fdfdfd;"></div>
<div class="b" style="left:441px;top:815.08px;width:1014.50px;height:33.74px;background:#f8f8f8;"></div>
<div class="b" style="left:441px;top:848.82px;width:1014.50px;height:33.74px;background:#fdfdfd;"></div>
<div class="b" style="left:441px;top:882.56px;width:1014.50px;height:33.74px;background:#f8f8f8;"></div>
<div class="b" style="left:441.5px;top:650.3px;width:1014.00px;height:27.90px;background:#e3e9f3;border-radius:5px"></div>
<svg class="b" style="left:367px;top:656.5px;" width="17" height="13" viewBox="0 0 17 13"><rect x="2" y="1.7" width="12.5" height="9.3" fill="#dde5f0" stroke="#1ee878" stroke-width="3.6"/></svg>
<svg class="b" style="left:367px;top:892.5px;" width="17" height="13" viewBox="0 0 17 13"><rect x="2" y="1.7" width="12.5" height="9.3" fill="#e2e2f4" stroke="#e8000c" stroke-width="3.6"/></svg>
<div class="t" style="left:419.50px;top:254.55px;font-family:'Liberation Mono',monospace;font-size:15.2px;letter-spacing:0.879px;color:#3a4250;-webkit-text-stroke:0.4px #3a4250">2</div>
<div class="t" style="left:419.50px;top:288.29px;font-family:'Liberation Mono',monospace;font-size:15.2px;letter-spacing:0.879px;color:#3a4250;-webkit-text-stroke:0.4px #3a4250">3</div>
<div class="t" style="left:419.50px;top:322.03px;font-family:'Liberation Mono',monospace;font-size:15.2px;letter-spacing:0.879px;color:#3a4250;-webkit-text-stroke:0.4px #3a4250">4</div>
<div class="t" style="left:419.50px;top:355.77px;font-family:'Liberation Mono',monospace;font-size:15.2px;letter-spacing:0.879px;color:#3a4250;-webkit-text-stroke:0.4px #3a4250">5</div>
<div class="t" style="left:419.50px;top:389.51px;font-family:'Liberation Mono',monospace;font-size:15.2px;letter-spacing:0.879px;color:#3a4250;-webkit-text-stroke:0.4px #3a4250">6</div>
<div class="t" style="left:419.50px;top:423.25px;font-family:'Liberation Mono',monospace;font-size:15.2px;letter-spacing:0.879px;color:#3a4250;-webkit-text-stroke:0.4px #3a4250">7</div>
<div class="t" style="left:419.50px;top:456.99px;font-family:'Liberation Mono',monospace;font-size:15.2px;letter-spacing:0.879px;color:#3a4250;-webkit-text-stroke:0.4px #3a4250">8</div>
<div class="t" style="left:419.50px;top:490.73px;font-family:'Liberation Mono',monospace;font-size:15.2px;letter-spacing:0.879px;color:#3a4250;-webkit-text-stroke:0.4px #3a4250">9</div>
<div class="t" style="left:409.50px;top:524.47px;font-family:'Liberation Mono',monospace;font-size:15.2px;letter-spacing:0.879px;color:#3a4250;-webkit-text-stroke:0.4px #3a4250">10</div>
<div class="t" style="left:409.50px;top:558.21px;font-family:'Liberation Mono',monospace;font-size:15.2px;letter-spacing:0.879px;color:#3a4250;-webkit-text-stroke:0.4px #3a4250">11</div>
<div class="t" style="left:409.50px;top:591.95px;font-family:'Liberation Mono',monospace;font-size:15.2px;letter-spacing:0.879px;color:#3a4250;-webkit-text-stroke:0.4px #3a4250">12</div>
<div class="t" style="left:409.50px;top:625.69px;font-family:'Liberation Mono',monospace;font-size:15.2px;letter-spacing:0.879px;color:#3a4250;-webkit-text-stroke:0.4px #3a4250">13</div>
<div class="t" style="left:409.50px;top:659.43px;font-family:'Liberation Mono',monospace;font-size:15.2px;letter-spacing:0.879px;color:#3a4250;-webkit-text-stroke:0.4px #3a4250">14</div>
<div class="t" style="left:409.50px;top:693.17px;font-family:'Liberation Mono',monospace;font-size:15.2px;letter-spacing:0.879px;color:#3a4250;-webkit-text-stroke:0.4px #3a4250">15</div>
<div class="t" style="left:409.50px;top:726.91px;font-family:'Liberation Mono',monospace;font-size:15.2px;letter-spacing:0.879px;color:#3a4250;-webkit-text-stroke:0.4px #3a4250">16</div>
<div class="t" style="left:409.50px;top:760.65px;font-family:'Liberation Mono',monospace;font-size:15.2px;letter-spacing:0.879px;color:#3a4250;-webkit-text-stroke:0.4px #3a4250">17</div>
<div class="t" style="left:409.50px;top:794.39px;font-family:'Liberation Mono',monospace;font-size:15.2px;letter-spacing:0.879px;color:#3a4250;-webkit-text-stroke:0.4px #3a4250">18</div>
<div class="t" style="left:409.50px;top:828.13px;font-family:'Liberation Mono',monospace;font-size:15.2px;letter-spacing:0.879px;color:#3a4250;-webkit-text-stroke:0.4px #3a4250">19</div>
<div class="t" style="left:409.50px;top:861.87px;font-family:'Liberation Mono',monospace;font-size:15.2px;letter-spacing:0.879px;color:#3a4250;-webkit-text-stroke:0.4px #3a4250">20</div>
<div class="t" style="left:409.50px;top:895.61px;font-family:'Liberation Mono',monospace;font-size:15.2px;letter-spacing:0.879px;color:#3a4250;-webkit-text-stroke:0.4px #3a4250">21</div>
<div class="t" style="left:441.50px;top:253.74px;font-family:'Liberation Mono',monospace;font-size:16.664px;color:#242424;-webkit-text-stroke:0.12px #242424">00:00:00</div>
<div class="t" style="left:801.50px;top:253.74px;font-family:'Liberation Mono',monospace;font-size:16.664px;color:#242424;-webkit-text-stroke:0.12px #242424">ORDERS REPORT</div>
<div class="t" style="left:761.50px;top:287.48px;font-family:'Liberation Mono',monospace;font-size:16.664px;color:#242424;-webkit-text-stroke:0.12px #242424">FROM 01/01/09 TO 01/31/09</div>
<div class="t" style="left:731.50px;top:354.96px;font-family:'Liberation Mono',monospace;font-size:16.664px;color:#242424;-webkit-text-stroke:0.12px #242424">ACCOUNT: NORTH RIDGE FURNITURES</div>
<div class="t" style="left:731.50px;top:388.70px;font-family:'Liberation Mono',monospace;font-size:16.664px;color:#242424;-webkit-text-stroke:0.12px #242424">ACCOUNT ID: 123456</div>
<div class="t" style="left:731.50px;top:422.44px;font-family:'Liberation Mono',monospace;font-size:16.664px;color:#242424;-webkit-text-stroke:0.12px #242424">CONTACT PERSON: John Doe</div>
<div class="t" style="left:441.50px;top:523.66px;font-family:'Liberation Mono',monospace;font-size:16.664px;color:#242424;-webkit-text-stroke:0.12px #242424">ITEM        QUANTITY  DESCRIPTION</div>
<div class="t" style="left:1071.50px;top:523.66px;font-family:'Liberation Mono',monospace;font-size:16.664px;color:#242424;-webkit-text-stroke:0.12px #242424">ITEM-CODE</div>
<div class="t" style="left:1221.50px;top:523.66px;font-family:'Liberation Mono',monospace;font-size:16.664px;color:#242424;-webkit-text-stroke:0.12px #242424">PRICE</div>
<div class="t" style="left:1311.50px;top:523.66px;font-family:'Liberation Mono',monospace;font-size:16.664px;color:#242424;-webkit-text-stroke:0.12px #242424">TOTAL</div>
<div class="t" style="left:581.50px;top:591.14px;font-family:'Liberation Mono',monospace;font-size:16.664px;color:#242424;-webkit-text-stroke:0.12px #242424">ORDER ID:  909090    SHIP DATE: 01/02/09</div>
<div class="t" style="left:441.50px;top:658.62px;font-family:'Liberation Mono',monospace;font-size:16.664px;color:#5c5c5c;-webkit-text-stroke:0.12px #5c5c5c">OFFICE CHAIRS</div>
<div class="t" style="left:631.50px;top:658.62px;font-family:'Liberation Mono',monospace;font-size:16.664px;color:#5c5c5c;-webkit-text-stroke:0.12px #5c5c5c">2  Black, leather, reclining</div>
<div class="t" style="left:1071.50px;top:658.62px;font-family:'Liberation Mono',monospace;font-size:16.664px;color:#5c5c5c;-webkit-text-stroke:0.12px #5c5c5c">BLK-65123</div>
<div class="t" style="left:1221.50px;top:658.62px;font-family:'Liberation Mono',monospace;font-size:16.664px;color:#5c5c5c;-webkit-text-stroke:0.12px #5c5c5c">98.99</div>
<div class="t" style="left:1301.50px;top:658.62px;font-family:'Liberation Mono',monospace;font-size:16.664px;color:#5c5c5c;-webkit-text-stroke:0.12px #5c5c5c">197.98</div>
<div class="t" style="left:631.50px;top:692.36px;font-family:'Liberation Mono',monospace;font-size:16.664px;color:#242424;-webkit-text-stroke:0.12px #242424">5  Brown, Suede, reclining</div>
<div class="t" style="left:1071.50px;top:692.36px;font-family:'Liberation Mono',monospace;font-size:16.664px;color:#242424;-webkit-text-stroke:0.12px #242424">BRN-65509</div>
<div class="t" style="left:1221.50px;top:692.36px;font-family:'Liberation Mono',monospace;font-size:16.664px;color:#242424;-webkit-text-stroke:0.12px #242424">89.00</div>
<div class="t" style="left:1301.50px;top:692.36px;font-family:'Liberation Mono',monospace;font-size:16.664px;color:#242424;-webkit-text-stroke:0.12px #242424">445.00</div>
<div class="t" style="left:631.50px;top:726.10px;font-family:'Liberation Mono',monospace;font-size:16.664px;color:#242424;-webkit-text-stroke:0.12px #242424">8  Beige, Cloth, straight-back</div>
<div class="t" style="left:1071.50px;top:726.10px;font-family:'Liberation Mono',monospace;font-size:16.664px;color:#242424;-webkit-text-stroke:0.12px #242424">BCO-33884</div>
<div class="t" style="left:1221.50px;top:726.10px;font-family:'Liberation Mono',monospace;font-size:16.664px;color:#242424;-webkit-text-stroke:0.12px #242424">49.99</div>
<div class="t" style="left:1301.50px;top:726.10px;font-family:'Liberation Mono',monospace;font-size:16.664px;color:#242424;-webkit-text-stroke:0.12px #242424">399.92</div>
<div class="t" style="left:581.50px;top:827.32px;font-family:'Liberation Mono',monospace;font-size:16.664px;color:#242424;-webkit-text-stroke:0.12px #242424">ORDER ID:  909091    SHIP DATE: 01/15/09</div>
<div class="t" style="left:441.50px;top:894.80px;font-family:'Liberation Mono',monospace;font-size:16.664px;color:#5c5c5c;-webkit-text-stroke:0.12px #5c5c5c">RUGS</div>
<div class="t" style="left:631.50px;top:894.80px;font-family:'Liberation Mono',monospace;font-size:16.664px;color:#5c5c5c;-webkit-text-stroke:0.12px #5c5c5c">5  Centerpiece, black</div>
<div class="t" style="left:1071.50px;top:894.80px;font-family:'Liberation Mono',monospace;font-size:16.664px;color:#5c5c5c;-webkit-text-stroke:0.12px #5c5c5c">CBR-45633</div>
<div class="t" style="left:1211.50px;top:894.80px;font-family:'Liberation Mono',monospace;font-size:16.664px;color:#5c5c5c;-webkit-text-stroke:0.12px #5c5c5c">199.99</div>
<div class="t" style="left:1301.50px;top:894.80px;font-family:'Liberation Mono',monospace;font-size:16.664px;color:#5c5c5c;-webkit-text-stroke:0.12px #5c5c5c">999.95</div>
<div class="b" style="left:364px;top:916.3px;width:1112.00px;height:20.70px;background:#efefef;"></div>
<div class="b" style="left:385px;top:917px;width:492.00px;height:19.00px;background:#cdcdcd;"></div>
<svg class="b" style="left:368px;top:919.5px;" width="11" height="14" viewBox="0 0 11 14"><path d="M7.5 2.5 L3 7 L7.5 11.5" stroke="#555" stroke-width="2.8" fill="none"/></svg>
<svg class="b" style="left:1439px;top:919.5px;" width="11" height="14" viewBox="0 0 11 14"><path d="M3 2.5 L7.5 7 L3 11.5" stroke="#555" stroke-width="2.8" fill="none"/></svg>
<div class="b" style="left:362px;top:938px;width:1116.00px;height:30.00px;background:#eef0f4;"></div>
<div class="b" style="left:362px;top:968px;width:1116.00px;height:2.00px;background:#d6dbe0;"></div>
<div class="b" style="left:1082.8px;top:942.5px;width:121.40px;height:21.00px;background:#f4f6f8;border:1px solid #dadde2;border-left-color:#9a9ea4;border-top-color:#b4b8be;border-left-width:1.5px;box-sizing:border-box"></div>
<div class="t" style="left:1086.05px;top:946.83px;font-family:'Liberation Sans',sans-serif;font-size:15.5px;color:#2222c8;font-weight:normal;transform:scaleX(0.9655);">sampleorders.txt</div>
<div class="b" style="left:1206.5px;top:943px;width:1.00px;height:23.00px;background:#a8acb2;"></div>
<div class="t" style="left:1209.80px;top:946.83px;font-family:'Liberation Sans',sans-serif;font-size:15.5px;color:#2a2a2a;font-weight:normal;transform:scaleX(0.9677);">Line:</div>
<div class="t" style="left:1255.66px;top:946.83px;font-family:'Liberation Sans',sans-serif;font-size:15.5px;color:#2a2a2a;font-weight:bold;transform:scaleX(1.0968);">3</div>
<div class="b" style="left:1269.5px;top:943px;width:1.00px;height:23.00px;background:#a8acb2;"></div>
<div class="t" style="left:1272.72px;top:946.83px;font-family:'Liberation Sans',sans-serif;font-size:15.5px;color:#2a2a2a;font-weight:normal;transform:scaleX(1.0031);">Col:</div>
<div class="t" style="left:1312.35px;top:946.83px;font-family:'Liberation Sans',sans-serif;font-size:15.5px;color:#2a2a2a;font-weight:bold;transform:scaleX(1.0445);">75</div>
<div class="b" style="left:1337.8px;top:943px;width:1.00px;height:23.00px;background:#a8acb2;"></div>
<svg class="b" style="left:1345px;top:945px;" width="18" height="18" viewBox="0 0 18 18"><circle cx="6.5" cy="6.5" r="5.3" fill="none" stroke="#2a2a2a" stroke-width="1.6"/><path d="M10.5 10.5 L16 16" stroke="#2a2a2a" stroke-width="2.6"/><path d="M3.8 6.5 H9.2" stroke="#1f5aa8" stroke-width="1.5"/></svg>
<svg class="b" style="left:1374px;top:945px;" width="18" height="18" viewBox="0 0 18 18"><circle cx="6.5" cy="6.5" r="5.3" fill="none" stroke="#2a2a2a" stroke-width="1.6"/><path d="M10.5 10.5 L16 16" stroke="#2a2a2a" stroke-width="2.6"/><path d="M3.8 6.5 H9.2" stroke="#1f5aa8" stroke-width="1.5"/><path d="M6.5 3.8 V9.2" stroke="#1f5aa8" stroke-width="1.5"/></svg>
<div class="b" style="left:1400px;top:944px;width:43.00px;height:20.00px;background:#ffffff;"></div>
<div class="t" style="left:1402.30px;top:946.83px;font-family:'Liberation Sans',sans-serif;font-size:15.5px;color:#2a2a2a;font-weight:normal;transform:scaleX(0.9651);">100%</div>
<svg class="b" style="left:1445px;top:951px;" width="8" height="5" viewBox="0 0 8 5"><path d="M0 0 L8 0 L4 4.5 Z" fill="#111"/></svg>
<svg class="b" style="left:1461px;top:950px;" width="15" height="15" viewBox="0 0 15 15"><rect x="10" y="0" width="2" height="2" fill="#9aa0a6"/><rect x="6" y="5" width="2" height="2" fill="#9aa0a6"/><rect x="10" y="5" width="2" height="2" fill="#9aa0a6"/><rect x="2" y="10" width="2" height="2" fill="#9aa0a6"/><rect x="6" y="10" width="2" height="2" fill="#9aa0a6"/><rect x="10" y="10" width="2" height="2" fill="#9aa0a6"/></svg>
<svg class="b" style="left:624px;top:174px;" width="26" height="22" viewBox="0 0 26 22"><path d="M4 10.5 A8.5 8.5 0 0 1 21 10.5" stroke="#3ec43e" stroke-width="2.6" fill="none"/><path d="M21 10.5 A8.5 8.5 0 0 1 4 10.5" stroke="#3ec43e" stroke-width="2.6" fill="none"/><path d="M16.8 9 L25.2 9 L21 14 Z" fill="#3ec43e"/><path d="M-0.2 12 L8.2 12 L4 7 Z" fill="#3ec43e"/></svg>
<svg class="b" style="left:671px;top:178px;" width="25" height="16" viewBox="0 0 25 16"><path d="M1.5 2.5 L1.5 14 L12 14 Z" fill="#2a8ae0"/><path d="M5.5 10.5 Q12 0 23 8" stroke="#2a8ae0" stroke-width="4.2" fill="none"/></svg>
<svg class="b" style="left:706px;top:183px;" width="9" height="6" viewBox="0 0 9 6"><path d="M0.5 0.5 L8 0.5 L4.2 5 Z" fill="#111"/></svg>
<svg class="b" style="left:726px;top:178px;" width="25" height="16" viewBox="0 0 25 16"><path d="M23.5 2.5 L23.5 14 L13 14 Z" fill="#b8b8b8"/><path d="M19.5 10.5 Q13 0 2 8" stroke="#b8b8b8" stroke-width="4.2" fill="none"/></svg>
<svg class="b" style="left:761px;top:183px;" width="9" height="6" viewBox="0 0 9 6"><path d="M0.5 0.5 L8 0.5 L4.2 5 Z" fill="#a0a4a8"/></svg>
<svg class="b" style="left:785px;top:173px;" width="26" height="24" viewBox="0 0 26 24"><path d="M1 20 L2.5 7 L5 1.5 H9.5 L10.5 7 V20 Z" fill="#2a8ee0"/><path d="M12.5 20 V7 L13.5 1.5 H18 L20 7 L21.5 17 V20 Z" fill="#2a8ee0"/><rect x="9.5" y="6" width="4" height="6" fill="#2a8ee0"/><rect x="1" y="18" width="9.5" height="3" fill="#f0a030"/><path d="M14 19.5 H23.5 M20.5 16.5 L24 19.5 L20.5 22.5" stroke="#f0a030" stroke-width="2.4" fill="none"/></svg>
<svg class="b" style="left:824px;top:173px;" width="24" height="24" viewBox="0 0 24 24"><rect x="0.5" y="0.5" width="20" height="17" fill="#fff" stroke="#e0e0e0"/><circle cx="5" cy="9" r="2.4" fill="#f29d24"/><circle cx="10" cy="9" r="2.4" fill="#f29d24"/><rect x="5" y="8" width="5" height="2" fill="#f29d24"/><circle cx="18" cy="9" r="2" fill="none" stroke="#2a8ee0" stroke-width="1.10"/><path d="M19.80 9.00 L20.90 9.00" stroke="#2a8ee0" stroke-width="1.5"/><path d="M18.90 10.56 L19.45 11.51" stroke="#2a8ee0" stroke-width="1.5"/><path d="M17.10 10.56 L16.55 11.51" stroke="#2a8ee0" stroke-width="1.5"/><path d="M16.20 9.00 L15.10 9.00" stroke="#2a8ee0" stroke-width="1.5"/><path d="M17.10 7.44 L16.55 6.49" stroke="#2a8ee0" stroke-width="1.5"/><path d="M18.90 7.44 L19.45 6.49" stroke="#2a8ee0" stroke-width="1.5"/><circle cx="12.5" cy="17" r="2.6" fill="none" stroke="#606060" stroke-width="1.43"/><path d="M14.84 17.00 L16.27 17.00" stroke="#606060" stroke-width="1.8"/><path d="M14.15 18.65 L15.17 19.67" stroke="#606060" stroke-width="1.8"/><path d="M12.50 19.34 L12.50 20.77" stroke="#606060" stroke-width="1.8"/><path d="M10.85 18.65 L9.83 19.67" stroke="#606060" stroke-width="1.8"/><path d="M10.16 17.00 L8.73 17.00" stroke="#606060" stroke-width="1.8"/><path d="M10.85 15.35 L9.83 14.33" stroke="#606060" stroke-width="1.8"/><path d="M12.50 14.66 L12.50 13.23" stroke="#606060" stroke-width="1.8"/><path d="M14.15 15.35 L15.17 14.33" stroke="#606060" stroke-width="1.8"/></svg>
<svg class="b" style="left:861px;top:174px;" width="25" height="24" viewBox="0 0 25 24"><rect x="1" y="1" width="23" height="5" fill="#f29d24"/><rect x="15.5" y="2.5" width="6.5" height="1.8" fill="#fff"/><circle cx="9.5" cy="13" r="5" fill="#dbeaf8" stroke="#2a8ee0" stroke-width="2.4"/><path d="M5.5 17 L1.5 21.5" stroke="#2a8ee0" stroke-width="2.6"/><path d="M17 12 H23 M17 15 H23 M17 18 H23" stroke="#dddddd" stroke-width="1"/></svg>
<svg class="b" style="left:900px;top:173px;" width="23" height="24" viewBox="0 0 23 24"><rect x="1.5" y="7" width="5.7" height="15.2" fill="#2a8ee0"/><rect x="9" y="10.5" width="4.5" height="11.7" fill="#f29d24"/><rect x="16" y="14" width="4.7" height="8.2" fill="#8a8a8a"/><path d="M3.5 2.5 L11.5 5.5 L19.5 9" stroke="#3ec43e" stroke-width="1.6" fill="none"/><circle cx="3.5" cy="2.5" r="2" fill="#3ec43e"/><circle cx="11.5" cy="5.5" r="2" fill="#3ec43e"/><circle cx="19.5" cy="9" r="2" fill="#3ec43e"/></svg>
<svg class="b" style="left:935px;top:175px;" width="26" height="24" viewBox="0 0 26 24"><circle cx="14" cy="10" r="5.5" fill="none" stroke="#c4c4c4" stroke-width="3.03"/><path d="M18.95 10.00 L21.98 10.00" stroke="#c4c4c4" stroke-width="3"/><path d="M17.50 13.50 L19.64 15.64" stroke="#c4c4c4" stroke-width="3"/><path d="M14.00 14.95 L14.00 17.98" stroke="#c4c4c4" stroke-width="3"/><path d="M10.50 13.50 L8.36 15.64" stroke="#c4c4c4" stroke-width="3"/><path d="M9.05 10.00 L6.03 10.00" stroke="#c4c4c4" stroke-width="3"/><path d="M10.50 6.50 L8.36 4.36" stroke="#c4c4c4" stroke-width="3"/><path d="M14.00 5.05 L14.00 2.03" stroke="#c4c4c4" stroke-width="3"/><path d="M17.50 6.50 L19.64 4.36" stroke="#c4c4c4" stroke-width="3"/><path d="M1 12 H6 M1 16 H7 M2 20 H8" stroke="#d0d0d0" stroke-width="1.6"/><circle cx="6" cy="3.5" r="2.4" fill="#c8c8c8"/></svg>
<div class="t" style="left:976px;top:173px;font-family:'Liberation Serif',serif;font-weight:bold;font-size:24px;color:#b8b8b8">A</div>
<svg class="b" style="left:986px;top:179px;" width="14" height="16" viewBox="0 0 14 16"><path d="M2 14 L12 3" stroke="#c4c4c4" stroke-width="2.6"/></svg>
<svg class="b" style="left:1019px;top:173px;" width="24" height="24" viewBox="0 0 24 24"><rect x="0.5" y="0.5" width="23" height="22.5" fill="#f6f5f3" stroke="#e6e4e0"/><circle cx="10" cy="10" r="8" fill="#fbfbfa"/><text x="3" y="11.5" font-family="Liberation Sans" font-weight="bold" font-size="13" fill="#f0a030">a</text><text x="11.5" y="21" font-family="Liberation Sans" font-weight="bold" font-size="14" fill="#3a8ede">z</text></svg>
<svg class="b" style="left:1056px;top:173px;" width="24" height="24" viewBox="0 0 24 24"><rect x="0.5" y="0.5" width="23" height="22.5" fill="#f6f5f3" stroke="#e6e4e0"/><circle cx="10" cy="10" r="8" fill="#fbfbfa"/><text x="2.5" y="12" font-family="Liberation Sans" font-weight="bold" font-size="13.5" fill="#f0a030">0</text><text x="11.5" y="21.5" font-family="Liberation Sans" font-weight="bold" font-size="13.5" fill="#3a8ede">9</text></svg>
<svg class="b" style="left:1094px;top:173px;" width="24" height="24" viewBox="0 0 24 24"><rect x="0.5" y="0.5" width="23" height="22.5" fill="#f6f5f3" stroke="#e6e4e0"/><circle cx="10" cy="10" r="8" fill="#fbfbfa"/><text x="3.5" y="10.5" font-family="Liberation Sans" font-weight="bold" font-size="10.5" fill="#f0a030">a-z</text><text x="4" y="21" font-family="Liberation Sans" font-weight="bold" font-size="10.5" fill="#3a8ede">0-9</text></svg>
<svg class="b" style="left:1131.5px;top:173px;" width="24" height="24" viewBox="0 0 24 24"><rect x="0.5" y="0.5" width="23" height="22.5" fill="#f6f5f3" stroke="#e6e4e0"/><circle cx="10" cy="10" r="8" fill="#fbfbfa"/><rect x="4" y="16" width="16" height="2.6" fill="#3a8ede"/></svg>
<svg class="b" style="left:1169px;top:173px;" width="24" height="24" viewBox="0 0 24 24"><rect x="0.5" y="0.5" width="23" height="22.5" fill="#f6f5f3" stroke="#e6e4e0"/><circle cx="10" cy="10" r="8" fill="#fbfbfa"/><text x="3.5" y="18.5" font-family="Liberation Sans" font-weight="bold" font-size="15.5" fill="#3a8ede">[ ]</text></svg>
<svg class="b" style="left:1213px;top:173px;" width="27" height="25" viewBox="0 0 27 25"><rect x="1" y="1" width="17" height="4" fill="#a8a8a8"/><rect x="1" y="6" width="17" height="16" fill="#dcdcdc"/><path d="M1 10 H18 M1 14 H18 M1 18 H18" stroke="#eeeeee" stroke-width="1"/><circle cx="19" cy="17" r="6.5" fill="#c4c4c4"/><path d="M15.5 17 L18.5 20 L23 14.5" stroke="#fff" stroke-width="1.8" fill="none"/></svg>
<svg class="b" style="left:1253px;top:181px;" width="21" height="8" viewBox="0 0 21 8"><circle cx="3.5" cy="4" r="2.7" fill="#8a8e94"/><circle cx="10.5" cy="4" r="2.7" fill="#8a8e94"/><circle cx="17.5" cy="4" r="2.7" fill="#8a8e94"/></svg>
<div class="b" style="left:1477.9px;top:118px;width:8.00px;height:851.60px;background:#eeeff1;"></div>
<div class="b" style="left:1485.9px;top:118.7px;width:425.10px;height:40.90px;background:#4a7eb9;"></div>
<div class="b" style="left:1911px;top:118px;width:1.50px;height:850.80px;background:#dde2e7;"></div>
<div class="t" style="left:1489.33px;top:130.82px;font-family:'Liberation Sans',sans-serif;font-size:15.5px;color:#ffffff;font-weight:normal;transform:scaleX(0.9456);">Region Properties</div>
<svg class="b" style="left:1613px;top:134.5px;" width="241" height="8" viewBox="0 0 241 8"><rect x="0" y="0" width="1.2" height="1.2" fill="#a3bfe2"/><rect x="0" y="4" width="1.2" height="1.2" fill="#a3bfe2"/><rect x="2" y="2" width="1.2" height="1.2" fill="#a3bfe2"/><rect x="2" y="6" width="1.2" height="1.2" fill="#a3bfe2"/><rect x="4" y="0" width="1.2" height="1.2" fill="#a3bfe2"/><rect x="4" y="4" width="1.2" height="1.2" fill="#a3bfe2"/><rect x="6" y="2" width="1.2" height="1.2" fill="#a3bfe2"/><rect x="6" y="6" width="1.2" height="1.2" fill="#a3bfe2"/><rect x="8" y="0" width="1.2" height="1.2" fill="#a3bfe2"/><rect x="8" y="4" width="1.2" height="1.2" fill="#a3bfe2"/><rect x="10" y="2" width="1.2" height="1.2" fill="#a3bfe2"/><rect x="10" y="6" width="1.2" height="1.2" fill="#a3bfe2"/><rect x="12" y="0" width="1.2" height="1.2" fill="#a3bfe2"/><rect x="12" y="4" width="1.2" height="1.2" fill="#a3bfe2"/><rect x="14" y="2" width="1.2" height="1.2" fill="#a3bfe2"/><rect x="14" y="6" width="1.2" height="1.2" fill="#a3bfe2"/><rect x="16" y="0" width="1.2" height="1.2" fill="#a3bfe2"/><rect x="16" y="4" width="1.2" height="1.2" fill="#a3bfe2"/><rect x="18" y="2" width="1.2" height="1.2" fill="#a3bfe2"/><rect x="18" y="6" width="1.2" height="1.2" fill="#a3bfe2"/><rect x="20" y="0" width="1.2" height="1.2" fill="#a3bfe2"/><rect x="20" y="4" width="1.2" height="1.2" fill="#a3bfe2"/><rect x="22" y="2" width="1.2" height="1.2" fill="#a3bfe2"/><rect x="22" y="6" width="1.2" height="1.2" fill="#a3bfe2"/><rect x="24" y="0" width="1.2" height="1.2" fill="#a3bfe2"/><rect x="24" y="4" width="1.2" height="1.2" fill="#a3bfe2"/><rect x="26" y="2" width="1.2" height="1.2" fill="#a3bfe2"/><rect x="26" y="6" width="1.2" height="1.2" fill="#a3bfe2"/><rect x="28" y="0" width="1.2" height="1.2" fill="#a3bfe2"/><rect x="28" y="4" width="1.2" height="1.2" fill="#a3bfe2"/><rect x="30" y="2" width="1.2" height="1.2" fill="#a3bfe2"/><rect x="30" y="6" width="1.2" height="1.2" fill="#a3bfe2"/><rect x="32" y="0" width="1.2" height="1.2" fill="#a3bfe2"/><rect x="32" y="4" width="1.2" height="1.2" fill="#a3bfe2"/><rect x="34" y="2" width="1.2" height="1.2" fill="#a3bfe2"/><rect x="34" y="6" width="1.2" height="1.2" fill="#a3bfe2"/><rect x="36" y="0" width="1.2" height="1.2" fill="#a3bfe2"/><rect x="36" y="4" width="1.2" height="1.2" fill="#a3bfe2"/><rect x="38" y="2" width="1.2" height="1.2" fill="#a3bfe2"/><rect x="38" y="6" width="1.2" height="1.2" fill="#a3bfe2"/><rect x="40" y="0" width="1.2" height="1.2" fill="#a3bfe2"/><rect x="40" y="4" width="1.2" height="1.2" fill="#a3bfe2"/><rect x="42" y="2" width="1.2" height="1.2" fill="#a3bfe2"/><rect x="42" y="6" width="1.2" height="1.2" fill="#a3bfe2"/><rect x="44" y="0" width="1.2" height="1.2" fill="#a3bfe2"/><rect x="44" y="4" width="1.2" height="1.2" fill="#a3bfe2"/><rect x="46" y="2" width="1.2" height="1.2" fill="#a3bfe2"/><rect x="46" y="6" width="1.2" height="1.2" fill="#a3bfe2"/><rect x="48" y="0" width="1.2" height="1.2" fill="#a3bfe2"/><rect x="48" y="4" width="1.2" height="1.2" fill="#a3bfe2"/><rect x="50" y="2" width="1.2" height="1.2" fill="#a3bfe2"/><rect x="50" y="6" width="1.2" height="1.2" fill="#a3bfe2"/><rect x="52" y="0" width="1.2" height="1.2" fill="#a3bfe2"/><rect x="52" y="4" width="1.2" height="1.2" fill="#a3bfe2"/><rect x="54" y="2" width="1.2" height="1.2" fill="#a3bfe2"/><rect x="54" y="6" width="1.2" height="1.2" fill="#a3bfe2"/><rect x="56" y="0" width="1.2" height="1.2" fill="#a3bfe2"/><rect x="56" y="4" width="1.2" height="1.2" fill="#a3bfe2"/><rect x="58" y="2" width="1.2" height="1.2" fill="#a3bfe2"/><rect x="58" y="6" width="1.2" height="1.2" fill="#a3bfe2"/><rect x="60" y="0" width="1.2" height="1.2" fill="#a3bfe2"/><rect x="60" y="4" width="1.2" height="1.2" fill="#a3bfe2"/><rect x="62" y="2" width="1.2" height="1.2" fill="#a3bfe2"/><rect x="62" y="6" width="1.2" height="1.2" fill="#a3bfe2"/><rect x="64" y="0" width="1.2" height="1.2" fill="#a3bfe2"/><rect x="64" y="4" width="1.2" height="1.2" fill="#a3bfe2"/><rect x="66" y="2" width="1.2" height="1.2" fill="#a3bfe2"/><rect x="66" y="6" width="1.2" height="1.2" fill="#a3bfe2"/><rect x="68" y="0" width="1.2" height="1.2" fill="#a3bfe2"/><rect x="68" y="4" width="1.2" height="1.2" fill="#a3bfe2"/><rect x="70" y="2" width="1.2" height="1.2" fill="#a3bfe2"/><rect x="70" y="6" width="1.2" height="1.2" fill="#a3bfe2"/><rect x="72" y="0" width="1.2" height="1.2" fill="#a3bfe2"/><rect x="72" y="4" width="1.2" height="1.2" fill="#a3bfe2"/><rect x="74" y="2" width="1.2" height="1.2" fill="#a3bfe2"/><rect x="74" y="6" width="1.2" height="1.2" fill="#a3bfe2"/><rect x="76" y="0" width="1.2" height="1.2" fill="#a3bfe2"/><rect x="76" y="4" width="1.2" height="1.2" fill="#a3bfe2"/><rect x="78" y="2" width="1.2" height="1.2" fill="#a3bfe2"/><rect x="78" y="6" width="1.2" height="1.2" fill="#a3bfe2"/><rect x="80" y="0" width="1.2" height="1.2" fill="#a3bfe2"/><rect x="80" y="4" width="1.2" height="1.2" fill="#a3bfe2"/><rect x="82" y="2" width="1.2" height="1.2" fill="#a3bfe2"/><rect x="82" y="6" width="1.2" height="1.2" fill="#a3bfe2"/><rect x="84" y="0" width="1.2" height="1.2" fill="#a3bfe2"/><rect x="84" y="4" width="1.2" height="1.2" fill="#a3bfe2"/><rect x="86" y="2" width="1.2" height="1.2" fill="#a3bfe2"/><rect x="86" y="6" width="1.2" height="1.2" fill="#a3bfe2"/><rect x="88" y="0" width="1.2" height="1.2" fill="#a3bfe2"/><rect x="88" y="4" width="1.2" height="1.2" fill="#a3bfe2"/><rect x="90" y="2" width="1.2" height="1.2" fill="#a3bfe2"/><rect x="90" y="6" width="1.2" height="1.2" fill="#a3bfe2"/><rect x="92" y="0" width="1.2" height="1.2" fill="#a3bfe2"/><rect x="92" y="4" width="1.2" height="1.2" fill="#a3bfe2"/><rect x="94" y="2" width="1.2" height="1.2" fill="#a3bfe2"/><rect x="94" y="6" width="1.2" height="1.2" fill="#a3bfe2"/><rect x="96" y="0" width="1.2" height="1.2" fill="#a3bfe2"/><rect x="96" y="4" width="1.2" height="1.2" fill="#a3bfe2"/><rect x="98" y="2" width="1.2" height="1.2" fill="#a3bfe2"/><rect x="98" y="6" width="1.2" height="1.2" fill="#a3bfe2"/><rect x="100" y="0" width="1.2" height="1.2" fill="#a3bfe2"/><rect x="100" y="4" width="1.2" height="1.2" fill="#a3bfe2"/><rect x="102" y="2" width="1.2" height="1.2" fill="#a3bfe2"/><rect x="102" y="6" width="1.2" height="1.2" fill="#a3bfe2"/><rect x="104" y="0" width="1.2" height="1.2" fill="#a3bfe2"/><rect x="104" y="4" width="1.2" height="1.2" fill="#a3bfe2"/><rect x="106" y="2" width="1.2" height="1.2" fill="#a3bfe2"/><rect x="106" y="6" width="1.2" height="1.2" fill="#a3bfe2"/><rect x="108" y="0" width="1.2" height="1.2" fill="#a3bfe2"/><rect x="108" y="4" width="1.2" height="1.2" fill="#a3bfe2"/><rect x="110" y="2" width="1.2" height="1.2" fill="#a3bfe2"/><rect x="110" y="6" width="1.2" height="1.2" fill="#a3bfe2"/><rect x="112" y="0" width="1.2" height="1.2" fill="#a3bfe2"/><rect x="112" y="4" width="1.2" height="1.2" fill="#a3bfe2"/><rect x="114" y="2" width="1.2" height="1.2" fill="#a3bfe2"/><rect x="114" y="6" width="1.2" height="1.2" fill="#a3bfe2"/><rect x="116" y="0" width="1.2" height="1.2" fill="#a3bfe2"/><rect x="116" y="4" width="1.2" height="1.2" fill="#a3bfe2"/><rect x="118" y="2" width="1.2" height="1.2" fill="#a3bfe2"/><rect x="118" y="6" width="1.2" height="1.2" fill="#a3bfe2"/><rect x="120" y="0" width="1.2" height="1.2" fill="#a3bfe2"/><rect x="120" y="4" width="1.2" height="1.2" fill="#a3bfe2"/><rect x="122" y="2" width="1.2" height="1.2" fill="#a3bfe2"/><rect x="122" y="6" width="1.2" height="1.2" fill="#a3bfe2"/><rect x="124" y="0" width="1.2" height="1.2" fill="#a3bfe2"/><rect x="124" y="4" width="1.2" height="1.2" fill="#a3bfe2"/><rect x="126" y="2" width="1.2" height="1.2" fill="#a3bfe2"/><rect x="126" y="6" width="1.2" height="1.2" fill="#a3bfe2"/><rect x="128" y="0" width="1.2" height="1.2" fill="#a3bfe2"/><rect x="128" y="4" width="1.2" height="1.2" fill="#a3bfe2"/><rect x="130" y="2" width="1.2" height="1.2" fill="#a3bfe2"/><rect x="130" y="6" width="1.2" height="1.2" fill="#a3bfe2"/><rect x="132" y="0" width="1.2" height="1.2" fill="#a3bfe2"/><rect x="132" y="4" width="1.2" height="1.2" fill="#a3bfe2"/><rect x="134" y="2" width="1.2" height="1.2" fill="#a3bfe2"/><rect x="134" y="6" width="1.2" height="1.2" fill="#a3bfe2"/><rect x="136" y="0" width="1.2" height="1.2" fill="#a3bfe2"/><rect x="136" y="4" width="1.2" height="1.2" fill="#a3bfe2"/><rect x="138" y="2" width="1.2" height="1.2" fill="#a3bfe2"/><rect x="138" y="6" width="1.2" height="1.2" fill="#a3bfe2"/><rect x="140" y="0" width="1.2" height="1.2" fill="#a3bfe2"/><rect x="140" y="4" width="1.2" height="1.2" fill="#a3bfe2"/><rect x="142" y="2" width="1.2" height="1.2" fill="#a3bfe2"/><rect x="142" y="6" width="1.2" height="1.2" fill="#a3bfe2"/><rect x="144" y="0" width="1.2" height="1.2" fill="#a3bfe2"/><rect x="144" y="4" width="1.2" height="1.2" fill="#a3bfe2"/><rect x="146" y="2" width="1.2" height="1.2" fill="#a3bfe2"/><rect x="146" y="6" width="1.2" height="1.2" fill="#a3bfe2"/><rect x="148" y="0" width="1.2" height="1.2" fill="#a3bfe2"/><rect x="148" y="4" width="1.2" height="1.2" fill="#a3bfe2"/><rect x="150" y="2" width="1.2" height="1.2" fill="#a3bfe2"/><rect x="150" y="6" width="1.2" height="1.2" fill="#a3bfe2"/><rect x="152" y="0" width="1.2" height="1.2" fill="#a3bfe2"/><rect x="152" y="4" width="1.2" height="1.2" fill="#a3bfe2"/><rect x="154" y="2" width="1.2" height="1.2" fill="#a3bfe2"/><rect x="154" y="6" width="1.2" height="1.2" fill="#a3bfe2"/><rect x="156" y="0" width="1.2" height="1.2" fill="#a3bfe2"/><rect x="156" y="4" width="1.2" height="1.2" fill="#a3bfe2"/><rect x="158" y="2" width="1.2" height="1.2" fill="#a3bfe2"/><rect x="158" y="6" width="1.2" height="1.2" fill="#a3bfe2"/><rect x="160" y="0" width="1.2" height="1.2" fill="#a3bfe2"/><rect x="160" y="4" width="1.2" height="1.2" fill="#a3bfe2"/><rect x="162" y="2" width="1.2" height="1.2" fill="#a3bfe2"/><rect x="162" y="6" width="1.2" height="1.2" fill="#a3bfe2"/><rect x="164" y="0" width="1.2" height="1.2" fill="#a3bfe2"/><rect x="164" y="4" width="1.2" height="1.2" fill="#a3bfe2"/><rect x="166" y="2" width="1.2" height="1.2" fill="#a3bfe2"/><rect x="166" y="6" width="1.2" height="1.2" fill="#a3bfe2"/><rect x="168" y="0" width="1.2" height="1.2" fill="#a3bfe2"/><rect x="168" y="4" width="1.2" height="1.2" fill="#a3bfe2"/><rect x="170" y="2" width="1.2" height="1.2" fill="#a3bfe2"/><rect x="170" y="6" width="1.2" height="1.2" fill="#a3bfe2"/><rect x="172" y="0" width="1.2" height="1.2" fill="#a3bfe2"/><rect x="172" y="4" width="1.2" height="1.2" fill="#a3bfe2"/><rect x="174" y="2" width="1.2" height="1.2" fill="#a3bfe2"/><rect x="174" y="6" width="1.2" height="1.2" fill="#a3bfe2"/><rect x="176" y="0" width="1.2" height="1.2" fill="#a3bfe2"/><rect x="176" y="4" width="1.2" height="1.2" fill="#a3bfe2"/><rect x="178" y="2" width="1.2" height="1.2" fill="#a3bfe2"/><rect x="178" y="6" width="1.2" height="1.2" fill="#a3bfe2"/><rect x="180" y="0" width="1.2" height="1.2" fill="#a3bfe2"/><rect x="180" y="4" width="1.2" height="1.2" fill="#a3bfe2"/><rect x="182" y="2" width="1.2" height="1.2" fill="#a3bfe2"/><rect x="182" y="6" width="1.2" height="1.2" fill="#a3bfe2"/><rect x="184" y="0" width="1.2" height="1.2" fill="#a3bfe2"/><rect x="184" y="4" width="1.2" height="1.2" fill="#a3bfe2"/><rect x="186" y="2" width="1.2" height="1.2" fill="#a3bfe2"/><rect x="186" y="6" width="1.2" height="1.2" fill="#a3bfe2"/><rect x="188" y="0" width="1.2" height="1.2" fill="#a3bfe2"/><rect x="188" y="4" width="1.2" height="1.2" fill="#a3bfe2"/><rect x="190" y="2" width="1.2" height="1.2" fill="#a3bfe2"/><rect x="190" y="6" width="1.2" height="1.2" fill="#a3bfe2"/><rect x="192" y="0" width="1.2" height="1.2" fill="#a3bfe2"/><rect x="192" y="4" width="1.2" height="1.2" fill="#a3bfe2"/><rect x="194" y="2" width="1.2" height="1.2" fill="#a3bfe2"/><rect x="194" y="6" width="1.2" height="1.2" fill="#a3bfe2"/><rect x="196" y="0" width="1.2" height="1.2" fill="#a3bfe2"/><rect x="196" y="4" width="1.2" height="1.2" fill="#a3bfe2"/><rect x="198" y="2" width="1.2" height="1.2" fill="#a3bfe2"/><rect x="198" y="6" width="1.2" height="1.2" fill="#a3bfe2"/><rect x="200" y="0" width="1.2" height="1.2" fill="#a3bfe2"/><rect x="200" y="4" width="1.2" height="1.2" fill="#a3bfe2"/><rect x="202" y="2" width="1.2" height="1.2" fill="#a3bfe2"/><rect x="202" y="6" width="1.2" height="1.2" fill="#a3bfe2"/><rect x="204" y="0" width="1.2" height="1.2" fill="#a3bfe2"/><rect x="204" y="4" width="1.2" height="1.2" fill="#a3bfe2"/><rect x="206" y="2" width="1.2" height="1.2" fill="#a3bfe2"/><rect x="206" y="6" width="1.2" height="1.2" fill="#a3bfe2"/><rect x="208" y="0" width="1.2" height="1.2" fill="#a3bfe2"/><rect x="208" y="4" width="1.2" height="1.2" fill="#a3bfe2"/><rect x="210" y="2" width="1.2" height="1.2" fill="#a3bfe2"/><rect x="210" y="6" width="1.2" height="1.2" fill="#a3bfe2"/><rect x="212" y="0" width="1.2" height="1.2" fill="#a3bfe2"/><rect x="212" y="4" width="1.2" height="1.2" fill="#a3bfe2"/><rect x="214" y="2" width="1.2" height="1.2" fill="#a3bfe2"/><rect x="214" y="6" width="1.2" height="1.2" fill="#a3bfe2"/><rect x="216" y="0" width="1.2" height="1.2" fill="#a3bfe2"/><rect x="216" y="4" width="1.2" height="1.2" fill="#a3bfe2"/><rect x="218" y="2" width="1.2" height="1.2" fill="#a3bfe2"/><rect x="218" y="6" width="1.2" height="1.2" fill="#a3bfe2"/><rect x="220" y="0" width="1.2" height="1.2" fill="#a3bfe2"/><rect x="220" y="4" width="1.2" height="1.2" fill="#a3bfe2"/><rect x="222" y="2" width="1.2" height="1.2" fill="#a3bfe2"/><rect x="222" y="6" width="1.2" height="1.2" fill="#a3bfe2"/><rect x="224" y="0" width="1.2" height="1.2" fill="#a3bfe2"/><rect x="224" y="4" width="1.2" height="1.2" fill="#a3bfe2"/><rect x="226" y="2" width="1.2" height="1.2" fill="#a3bfe2"/><rect x="226" y="6" width="1.2" height="1.2" fill="#a3bfe2"/><rect x="228" y="0" width="1.2" height="1.2" fill="#a3bfe2"/><rect x="228" y="4" width="1.2" height="1.2" fill="#a3bfe2"/><rect x="230" y="2" width="1.2" height="1.2" fill="#a3bfe2"/><rect x="230" y="6" width="1.2" height="1.2" fill="#a3bfe2"/><rect x="232" y="0" width="1.2" height="1.2" fill="#a3bfe2"/><rect x="232" y="4" width="1.2" height="1.2" fill="#a3bfe2"/><rect x="234" y="2" width="1.2" height="1.2" fill="#a3bfe2"/><rect x="234" y="6" width="1.2" height="1.2" fill="#a3bfe2"/><rect x="236" y="0" width="1.2" height="1.2" fill="#a3bfe2"/><rect x="236" y="4" width="1.2" height="1.2" fill="#a3bfe2"/><rect x="238" y="2" width="1.2" height="1.2" fill="#a3bfe2"/><rect x="238" y="6" width="1.2" height="1.2" fill="#a3bfe2"/><rect x="240" y="0" width="1.2" height="1.2" fill="#a3bfe2"/><rect x="240" y="4" width="1.2" height="1.2" fill="#a3bfe2"/></svg>
<svg class="b" style="left:1860px;top:135px;" width="11" height="7" viewBox="0 0 11 7"><path d="M0.5 0.5 L10.5 0.5 L5.5 6.5 Z" fill="#fff"/></svg>
<svg class="b" style="left:1877px;top:132px;" width="11" height="13" viewBox="0 0 11 13"><rect x="2" y="0.5" width="6" height="7" fill="none" stroke="#fff" stroke-width="1.6"/><rect x="0" y="7" width="10" height="1.6" fill="#fff"/><rect x="4.2" y="8" width="1.6" height="4.5" fill="#fff"/></svg>
<svg class="b" style="left:1894px;top:132px;" width="13" height="13" viewBox="0 0 13 13"><path d="M2.5 2.5 L10.5 10.5 M10.5 2.5 L2.5 10.5" stroke="#fff" stroke-width="3" stroke-linecap="round"/></svg>
<div class="b" style="left:1485.9px;top:159.6px;width:425.10px;height:45.20px;background:#f0f4f8;"></div>
<div class="b" style="left:1570px;top:171px;width:1.00px;height:28.00px;background:#cfd5dc;"></div>
<div class="b" style="left:1616px;top:171px;width:1.00px;height:28.00px;background:#cfd5dc;"></div>
<div class="b" style="left:1660px;top:171px;width:1.00px;height:28.00px;background:#cfd5dc;"></div>
<svg class="b" style="left:1499px;top:176px;" width="24" height="19" viewBox="0 0 24 19"><rect x="0.8" y="0.8" width="21.5" height="16.8" fill="#fbfcfd" stroke="#8ab4e0" stroke-width="0.8" stroke-dasharray="1.2 1.2"/><path d="M0.8 0.8 H13 L6.5 9.2 L13 17.6 H0.8 Z" fill="#f29d1e"/><path d="M8.5 9.2 H17.5 M12 5.5 L8.5 9.2 L12 12.9" stroke="#2a8ee0" stroke-width="2.6" fill="none"/></svg>
<svg class="b" style="left:1536px;top:176px;" width="24" height="19" viewBox="0 0 24 19"><rect x="0.8" y="0.8" width="21.5" height="16.8" fill="#fbfcfd" stroke="#8ab4e0" stroke-width="0.8" stroke-dasharray="1.2 1.2"/><path d="M22.3 0.8 H10 L16.5 9.2 L10 17.6 H22.3 Z" fill="#f29d1e"/><path d="M14.5 9.2 H5.5 M11 5.5 L14.5 9.2 L11 12.9" stroke="#2a8ee0" stroke-width="2.6" fill="none"/></svg>
<svg class="b" style="left:1580px;top:175px;" width="26" height="24" viewBox="0 0 26 24"><path d="M9 14.5 H2 V2 H24 V14.5 H17" stroke="#2a8ee0" stroke-width="2.6" fill="none"/><path d="M15.5 5.5 L9 14 H13 L9.5 22 L18 12 H14 Z" fill="#f29d1e"/></svg>
<svg class="b" style="left:1626px;top:175px;" width="26" height="24" viewBox="0 0 26 24"><rect x="1.5" y="1" width="6.5" height="5" rx="1" fill="#f29d1e"/><rect x="1.5" y="7.5" width="6.5" height="5" rx="1" fill="#f29d1e"/><rect x="1.5" y="14" width="6.5" height="5.5" rx="1" fill="#f29d1e"/><path d="M9 10 H14.5 M12.5 8 L14.5 10 L12.5 12" stroke="#f29d1e" stroke-width="1.5" fill="none"/><rect x="16" y="7" width="8" height="6" fill="#2a8ee0"/></svg>
<svg class="b" style="left:1670px;top:175px;" width="28" height="24" viewBox="0 0 28 24"><path d="M9 13.5 H2 V2.5 H25.5 V13.5 H21" stroke="#f29d1e" stroke-width="2.4" fill="none"/><rect x="1" y="1.5" width="4" height="13" fill="#f29d1e"/><path d="M4 6 H11 M6 4 L4 6 L6 8 M9 4 L11 6 L9 8" stroke="#111" stroke-width="1.5" fill="none"/><path d="M18.5 5.5 L12.5 14 H16 L12.5 21.5 L21 11.5 H17 Z" fill="#2a8ee0"/></svg>
<svg class="b" style="left:1709px;top:173px;" width="25" height="25" viewBox="0 0 25 25"><path d="M3.5 3.5 L21 21 M21 3.5 L3.5 21" stroke="#d04a30" stroke-width="4.4" stroke-linecap="round"/></svg>
<div class="b" style="left:1485.9px;top:204.8px;width:425.10px;height:724.70px;background:#ffffff;"></div>
<div class="b" style="left:1485px;top:204.8px;width:1.30px;height:724.70px;background:#d6dadd;"></div>
<div class="b" style="left:1499px;top:222px;width:397.00px;height:336.00px;background:#ffffff;border:1px solid #e4e8ec;border-radius:6px;box-sizing:border-box"></div>
<div class="b" style="left:1500px;top:223px;width:395.00px;height:35.00px;background:#f6f8fa;border-radius:5px 5px 0 0;background:linear-gradient(#f4f6f9,#fbfcfd)"></div>
<div class="b" style="left:1500px;top:258px;width:395.00px;height:1.00px;background:#e8ecf0;"></div>
<div class="t" style="left:1518.55px;top:232.82px;font-family:'Liberation Sans',sans-serif;font-size:15.5px;color:#1a1a1a;font-weight:bold;transform:scaleX(0.8725);">Region Details</div>
<div class="t" style="left:1506.85px;top:278.75px;font-family:'Liberation Sans',sans-serif;font-size:15px;color:#3a3a3a;font-weight:normal;transform:scaleX(0.9572);">Region Name</div>
<div class="b" style="left:1634px;top:273px;width:205.00px;height:27.00px;background:#ffffff;border:1px solid #d6d9dd;box-sizing:border-box"></div>
<div class="b" style="left:1637.5px;top:277px;width:1.20px;height:19.00px;background:#222;"></div>
<div class="t" style="left:1637.88px;top:278.25px;font-family:'Liberation Sans',sans-serif;font-size:15px;color:#111;font-weight:normal;transform:scaleX(0.9314);">Data</div>
<div class="t" style="left:1506.86px;top:311.75px;font-family:'Liberation Sans',sans-serif;font-size:15px;color:#3a3a3a;font-weight:normal;transform:scaleX(0.9506);">Region Type</div>
<div class="t" style="left:1635.34px;top:311.75px;font-family:'Liberation Sans',sans-serif;font-size:15px;color:#2a2a2a;font-weight:normal;transform:scaleX(0.9641);">Data</div>
<div class="t" style="left:1506.86px;top:353.25px;font-family:'Liberation Sans',sans-serif;font-size:15px;color:#3a3a3a;font-weight:normal;transform:scaleX(0.9473);">Region End Type</div>
<div class="b" style="left:1634px;top:347px;width:205.00px;height:26.00px;background:#ffffff;border:1px solid #d6d9dd;box-sizing:border-box"></div>
<div class="t" style="left:1637.82px;top:353.25px;font-family:'Liberation Sans',sans-serif;font-size:15px;color:#111;font-weight:normal;transform:scaleX(0.9825);">Line Count</div>
<svg class="b" style="left:1820px;top:355px;" width="13" height="8" viewBox="0 0 13 8"><path d="M1 1 L6.5 6.5 L12 1" stroke="#333" stroke-width="1.2" fill="none"/></svg>
<div class="t" style="left:1507.84px;top:386.75px;font-family:'Liberation Sans',sans-serif;font-size:15px;color:#3a3a3a;font-weight:normal;transform:scaleX(0.9684);">Line Count</div>
<div class="b" style="left:1634px;top:380px;width:205.00px;height:26.00px;background:#ffffff;border:1px solid #d6d9dd;box-sizing:border-box"></div>
<div class="t" style="left:1636.07px;top:383.75px;font-family:'Liberation Sans',sans-serif;font-size:15px;color:#111;font-weight:normal;transform:scaleX(0.7752);">1</div>
<svg class="b" style="left:1821px;top:383px;" width="13" height="20" viewBox="0 0 13 20"><path d="M1.5 7 L6.5 2 L11.5 7 M1.5 13 L6.5 18 L11.5 13" stroke="#333" stroke-width="1.2" fill="none"/></svg>
<div class="b" style="left:1509px;top:488px;width:16.00px;height:16.00px;background:#ffffff;border:1.3px solid #333;box-sizing:border-box"></div>
<div class="t" style="left:1532.26px;top:489.25px;font-family:'Liberation Sans',sans-serif;font-size:15px;color:#3a3a3a;font-weight:normal;transform:scaleX(0.9859);">Overlapping Container</div>
<svg class="b" style="left:1819px;top:490px;" width="17" height="17" viewBox="0 0 17 17"><circle cx="8.5" cy="8.5" r="8" fill="#d8d8d8"/><path d="M9.8 4 L9.6 5.5 M9 7.5 L7.5 14" stroke="#fff" stroke-width="2.2" stroke-linecap="round"/></svg>
<div class="b" style="left:1509px;top:519px;width:16.00px;height:16.00px;background:#ffffff;border:1.3px solid #333;box-sizing:border-box"></div>
<div class="t" style="left:1532.27px;top:520.25px;font-family:'Liberation Sans',sans-serif;font-size:15px;color:#3a3a3a;font-weight:normal;transform:scaleX(0.9735);">Container Region</div>
<svg class="b" style="left:1819px;top:521px;" width="17" height="17" viewBox="0 0 17 17"><circle cx="8.5" cy="8.5" r="8" fill="#d8d8d8"/><path d="M9.8 4 L9.6 5.5 M9 7.5 L7.5 14" stroke="#fff" stroke-width="2.2" stroke-linecap="round"/></svg>
<div class="b" style="left:1485px;top:929.5px;width:427.50px;height:39.30px;background:#dfe6ee;"></div>
<div class="b" style="left:1754px;top:932px;width:147.00px;height:36.80px;background:#4a7eb9;"></div>
<div class="t" style="left:1491.32px;top:942.33px;font-family:'Liberation Sans',sans-serif;font-size:15.5px;color:#2a2a2a;font-weight:normal;transform:scaleX(0.9540);">Project Explorer</div>
<div class="t" style="left:1629.80px;top:942.33px;font-family:'Liberation Sans',sans-serif;font-size:15.5px;color:#2a2a2a;font-weight:normal;transform:scaleX(0.9096);">Server Explorer</div>
<div class="t" style="left:1760.83px;top:942.33px;font-family:'Liberation Sans',sans-serif;font-size:15.5px;color:#ffffff;font-weight:normal;transform:scaleX(0.9443);">Report Properties</div>
</body></html>
